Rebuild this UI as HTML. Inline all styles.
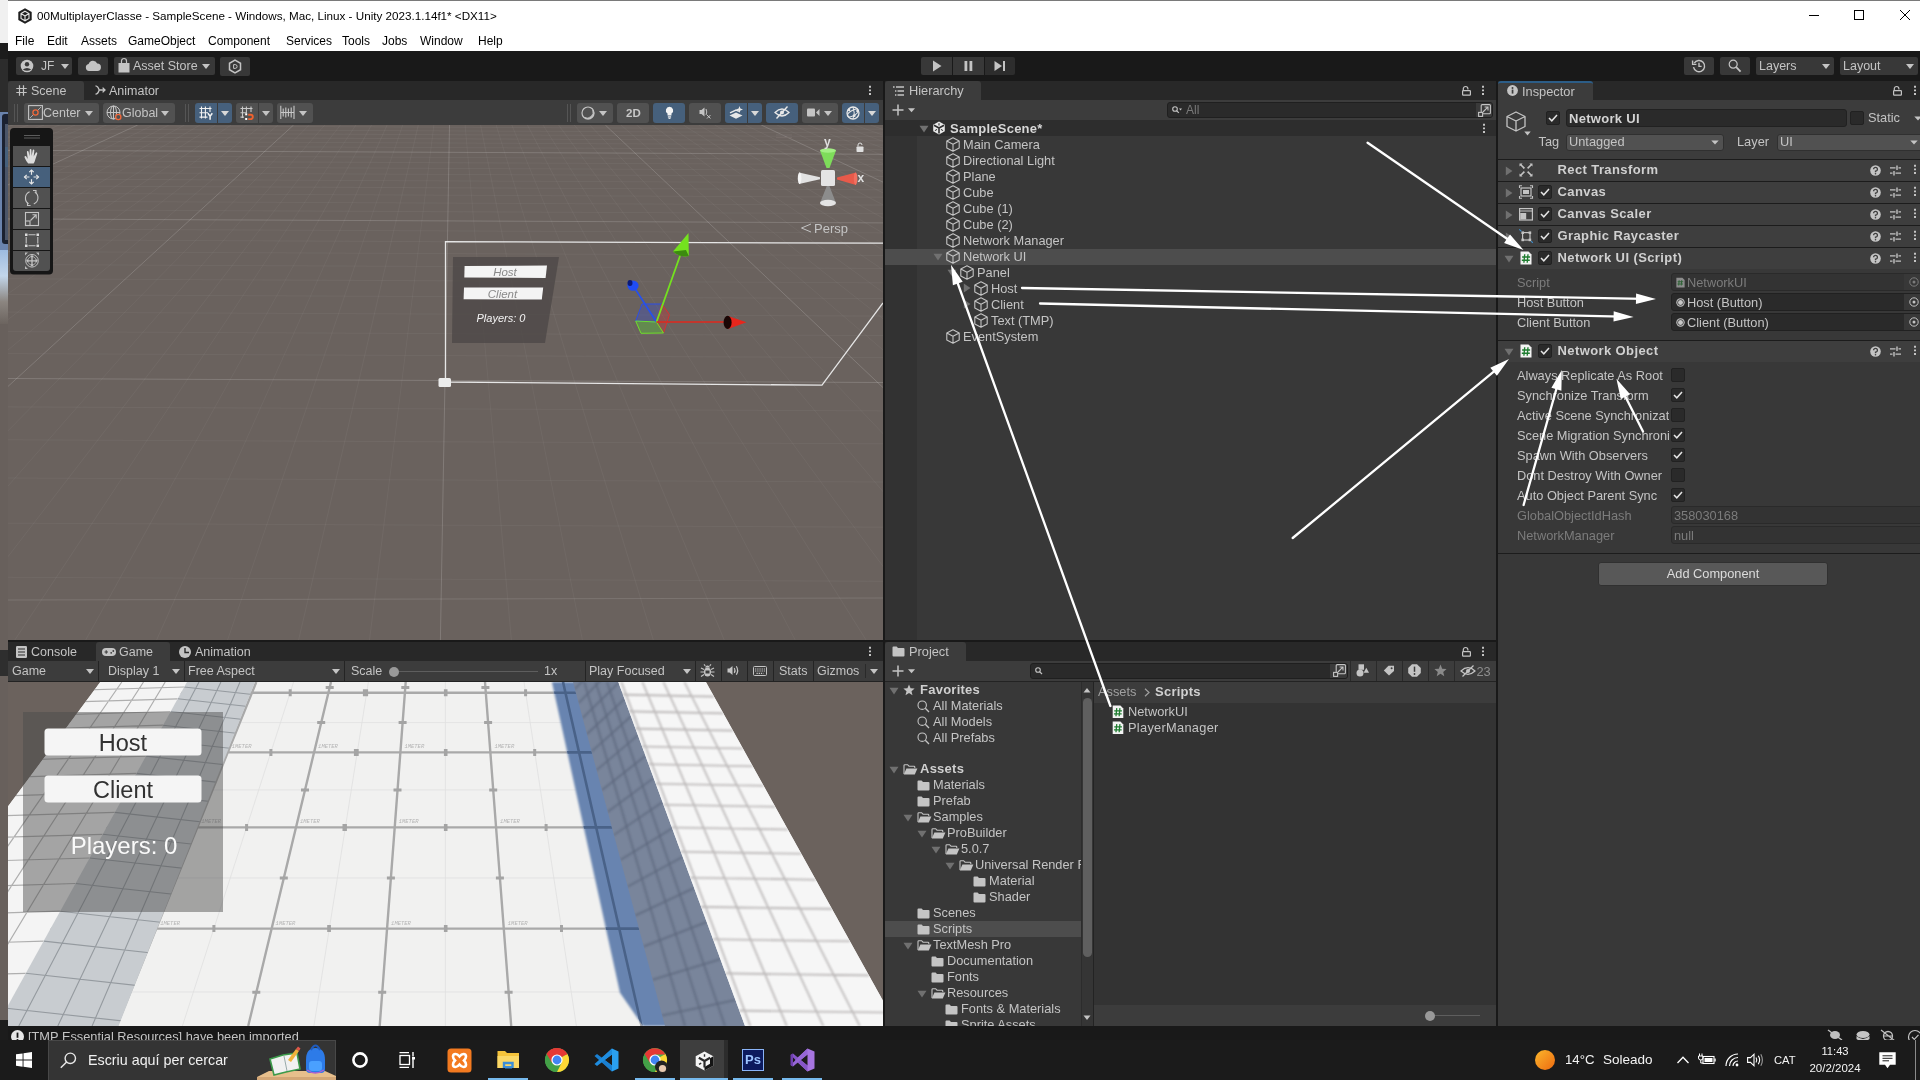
<!DOCTYPE html>
<html><head><meta charset="utf-8"><title>Unity</title>
<style>
*{box-sizing:border-box;margin:0;padding:0}
html,body{width:1920px;height:1080px;overflow:hidden;background:#191919;font-family:"Liberation Sans",sans-serif;font-size:12px;color:#c4c4c4}
.a{position:absolute}
.t{position:absolute;white-space:nowrap;line-height:16px;height:16px}
.b{font-weight:bold}
#win{position:absolute;left:8px;top:0;width:1912px;height:1040px;background:transparent;overflow:hidden;will-change:transform}
#title{position:absolute;left:0;top:0;width:1912px;height:51px;background:#fff;border-top:1px solid #7a7a7a;color:#000}
.menu{position:absolute;top:32px;font-size:12px;color:#000;line-height:16px}
.tb{position:absolute;background:#383838;border-radius:2px}
.tabbar{position:absolute;background:#282828}
.tab{position:absolute;background:#3c3c3c;border-radius:3px 3px 0 0}
.ptool{position:absolute;background:#3c3c3c}
.sb{position:absolute;background:#515151;border-radius:3px}
.sb.on{background:#46607c}
.panel{position:absolute;background:#383838}
.inp{position:absolute;background:#2a2a2a;border:1px solid #212121;border-radius:3px}
.tri-d{position:absolute;width:0;height:0;border-left:4px solid transparent;border-right:4px solid transparent;border-top:5px solid #c4c4c4}
.tri-r{position:absolute;width:0;height:0;border-top:4px solid transparent;border-bottom:4px solid transparent;border-left:6px solid #6e6e6e}
.fold-d{position:absolute;width:0;height:0;border-left:5px solid transparent;border-right:5px solid transparent;border-top:7px solid #6e6e6e}
svg{position:absolute;overflow:visible}
</style></head><body>

<!-- left strip of window behind -->
<div class="a" id="strip" style="left:0;top:0;width:8px;height:1040px;background:#2b2b2b">
  <div class="a" style="left:0;top:0;width:8px;height:43px;background:#f0f0f0"></div>
  <div class="a" style="left:0;top:43px;width:8px;height:16px;background:#1c1c1c"></div>
  <div class="a" style="left:0;top:59px;width:8px;height:53px;background:#2c2c2c"></div>
  <div class="a" style="left:0;top:112px;width:8px;height:138px;background:#6a83ad"></div>
  <div class="a" style="left:2px;top:114px;width:6px;height:130px;background:#1b2130;border-radius:3px 0 0 3px"></div>
  <div class="a" style="left:5px;top:124px;width:3px;height:116px;background:#4b5568"></div>
  <div class="a" style="left:5px;top:147px;width:3px;height:20px;background:#46607c"></div>
  <div class="a" style="left:0;top:250px;width:8px;height:74px;background:linear-gradient(#9dbbe0,#c3d6ea 35%,#8b8580 70%,#6c645f)"></div>
  <div class="a" style="left:0;top:324px;width:8px;height:326px;background:#68605c"></div>
  <div class="a" style="left:0;top:650px;width:8px;height:26px;background:#2e2e2e"></div>
  <div class="a" style="left:0;top:676px;width:8px;height:344px;background:#68605c"></div>
  <div class="a" style="left:0;top:1020px;width:8px;height:20px;background:#1c1c1c"></div>
</div>

<div id="win">
  <!-- TITLE BAR -->
  <div id="title">
    <div class="t" style="left:29px;top:7px;font-size:11.66px;color:#000">00MultiplayerClasse - SampleScene - Windows, Mac, Linux - Unity 2023.1.14f1* &lt;DX11&gt;</div>
    <div class="menu" style="left:7px">File</div>
    <div class="menu" style="left:39px">Edit</div>
    <div class="menu" style="left:73px">Assets</div>
    <div class="menu" style="left:120px">GameObject</div>
    <div class="menu" style="left:200px">Component</div>
    <div class="menu" style="left:278px">Services</div>
    <div class="menu" style="left:334px">Tools</div>
    <div class="menu" style="left:374px">Jobs</div>
    <div class="menu" style="left:412px">Window</div>
    <div class="menu" style="left:470px">Help</div>
  </div>
  
  <!-- MAIN TOOLBAR (y 51-81), coordinates relative to #win (x-8) -->
  <div class="tb" style="left:8px;top:57px;width:56px;height:18px"></div>
  <svg style="left:12px;top:59px" width="14" height="14" viewBox="0 0 14 14"><circle cx="7" cy="7" r="6.3" fill="#c4c4c4"/><circle cx="7" cy="5.2" r="2.2" fill="#383838"/><path d="M2.8 10.6 Q7 7.2 11.2 10.6 Q7 13 2.8 10.6Z" fill="#383838"/></svg>
  <div class="t" style="left:33px;top:58px">JF</div>
  <div class="tri-d" style="left:53px;top:64px"></div>
  <div class="tb" style="left:70px;top:57px;width:30px;height:18px"></div>
  <svg style="left:77px;top:60px" width="16" height="11" viewBox="0 0 16 11"><path d="M4 11 A3.5 3.5 0 0 1 3.6 4.1 A4.6 4.6 0 0 1 12.2 3.6 A3.7 3.7 0 0 1 12.3 11Z" fill="#c4c4c4"/></svg>
  <div class="tb" style="left:106px;top:57px;width:101px;height:18px"></div>
  <svg style="left:110px;top:58px" width="12" height="15" viewBox="0 0 12 15"><path d="M0.5 5 H11.5 V14.5 H0.5Z" fill="#c4c4c4"/><path d="M3.5 5 V3 A2.5 2.5 0 0 1 8.5 3 V5" fill="none" stroke="#c4c4c4" stroke-width="1.2"/></svg>
  <div class="t" style="left:125px;top:58px;font-size:12.5px">Asset Store</div>
  <div class="tri-d" style="left:194px;top:64px"></div>
  <div class="tb" style="left:212px;top:57px;width:30px;height:19px"></div>
  <svg style="left:220px;top:59px" width="14" height="15" viewBox="0 0 14 15"><path d="M7 1.2 L12.5 4.3 V10.7 L7 13.8 L1.5 10.7 V4.3Z" fill="none" stroke="#c4c4c4" stroke-width="1.5"/><path d="M5.6 5.6 H7.2 A1.9 1.9 0 0 1 7.2 9.4 H5.6Z" fill="none" stroke="#c4c4c4" stroke-width="1"/></svg>

  <!-- play controls -->
  <div class="tb" style="left:913px;top:57px;width:31px;height:18px;border-radius:2px 0 0 2px"></div>
  <div class="tb" style="left:945px;top:57px;width:31px;height:18px;border-radius:0"></div>
  <div class="tb" style="left:977px;top:57px;width:30px;height:18px;border-radius:0 2px 2px 0;background:#2d2d2d"></div>
  <svg style="left:924px;top:60px" width="10" height="12" viewBox="0 0 10 12"><path d="M1 0.5 L9.5 6 L1 11.5Z" fill="#c4c4c4"/></svg>
  <svg style="left:956px;top:61px" width="9" height="10" viewBox="0 0 9 10"><rect x="0.5" y="0" width="2.8" height="10" fill="#c4c4c4"/><rect x="5.5" y="0" width="2.8" height="10" fill="#c4c4c4"/></svg>
  <svg style="left:986px;top:61px" width="12" height="10" viewBox="0 0 12 10"><path d="M0.5 0 L8 5 L0.5 10Z" fill="#c4c4c4"/><rect x="9" y="0" width="2" height="10" fill="#c4c4c4"/></svg>

  <!-- right controls -->
  <div class="tb" style="left:1676px;top:57px;width:30px;height:18px"></div>
  <svg style="left:1684px;top:59px" width="14" height="14" viewBox="0 0 14 14"><path d="M2.2 4.2 A5.6 5.6 0 1 1 1.5 8.2" fill="none" stroke="#c4c4c4" stroke-width="1.4"/><path d="M0.6 1.6 V5.4 H4.4" fill="none" stroke="#c4c4c4" stroke-width="1.4"/><path d="M7 3.8 V7.4 H9.6" fill="none" stroke="#c4c4c4" stroke-width="1.4"/></svg>
  <div class="tb" style="left:1712px;top:57px;width:30px;height:18px"></div>
  <svg style="left:1720px;top:59px" width="14" height="14" viewBox="0 0 14 14"><circle cx="5.2" cy="5.2" r="4" fill="none" stroke="#c4c4c4" stroke-width="1.2"/><path d="M8.2 8.2 L12.6 12.6" stroke="#c4c4c4" stroke-width="1.8"/></svg>
  <div class="tb" style="left:1748px;top:57px;width:78px;height:18px"></div>
  <div class="t" style="left:1751px;top:58px;font-size:12.5px">Layers</div>
  <div class="tri-d" style="left:1814px;top:64px"></div>
  <div class="tb" style="left:1832px;top:57px;width:78px;height:18px"></div>
  <div class="t" style="left:1835px;top:58px;font-size:12.5px">Layout</div>
  <div class="tri-d" style="left:1898px;top:64px"></div>

  <!-- window controls -->
  <div class="a" style="left:1801px;top:15px;width:10px;height:1px;background:#000"></div>
  <div class="a" style="left:1846px;top:10px;width:10px;height:10px;border:1px solid #000"></div>
  <svg style="left:1892px;top:10px" width="10" height="10" viewBox="0 0 10 10"><path d="M0 0 L10 10 M10 0 L0 10" stroke="#000" stroke-width="1"/></svg>
  <!-- unity logo in title -->
  <svg style="left:10px;top:8px" width="14" height="16" viewBox="0 0 14 16"><path d="M7 0.3 L13.7 4.1 V11.900 L7 15.700 L0.3 11.900 V4.100Z" fill="#1e1e1e"/><path d="M7 3.200 L11 5.500 V10.400 L7 12.800 L3 10.400 V5.500Z M7 8 V12.800 M7 8 L3 5.500 M7 8 L11 5.500" fill="none" stroke="#e4e4e4" stroke-width="1.100"/></svg>
  <!--TOOLBAR-->
  
  <!-- SCENE PANEL: window coords (x-8). panel x 0..875 -->
  <div class="tabbar" style="left:0;top:81px;width:875px;height:19px"></div>
  <div class="tab" style="left:0;top:81px;width:76px;height:19px"></div>
  <svg style="left:7.500px;top:85px" width="11" height="11" viewBox="0 0 11 11"><path d="M3.500 0.300 V10.700 M7.500 0.300 V10.700 M0.300 3.500 H10.700 M0.300 7.500 H10.700" stroke="#c4c4c4" stroke-width="1.200" fill="none"/></svg>
  <div class="t" style="left:23px;top:83px;font-size:12.5px">Scene</div>
  <svg style="left:87px;top:85px" width="11" height="10" viewBox="0 0 11 10"><path d="M0.500 0.800 Q3 1 4.200 5 Q3 9 0.500 9.200 M4.200 5 H10 M7.600 2.600 L10 5 L7.600 7.400" stroke="#c4c4c4" stroke-width="1.300" fill="none"/></svg>
  <div class="t" style="left:101px;top:83px;font-size:12.5px">Animator</div>
  <svg style="left:860px;top:85px" width="4" height="12" viewBox="0 0 4 12"><path d="M1 0.800 H3 V2.700 H1Z M1 4.400 H3 V6.300 H1Z M1 8 H3 V9.900 H1Z" fill="#c4c4c4"/></svg>
  <div class="ptool" style="left:0;top:100px;width:875px;height:25px"></div>
  <div class="a" style="left:6px;top:104px;width:1px;height:18px;background:#555"></div>
  <div class="a" style="left:9px;top:104px;width:1px;height:18px;background:#555"></div>
  <div class="sb" style="left:16px;top:103px;width:75px;height:20px"></div>
  <svg style="left:20px;top:105px" width="15" height="15" viewBox="0 0 15 15"><rect x="0.6" y="0.6" width="13.8" height="13.8" fill="none" stroke="#c4c4c4" stroke-width="1.1"/><path d="M2 13 L13 2" stroke="#c4c4c4" stroke-width="0.8"/><circle cx="7.5" cy="7.5" r="2.6" fill="#515151" stroke="#f0683a" stroke-width="1.3"/></svg>
  <div class="t" style="left:35px;top:105px;font-size:12.5px">Center</div>
  <div class="tri-d" style="left:77px;top:111px"></div>
  <div class="sb" style="left:95px;top:103px;width:72px;height:20px"></div>
  <svg style="left:98px;top:105px" width="17" height="16" viewBox="0 0 17 16"><circle cx="7.5" cy="7.5" r="6.5" fill="none" stroke="#c4c4c4" stroke-width="1"/><ellipse cx="7.5" cy="7.5" rx="3" ry="6.5" fill="none" stroke="#c4c4c4" stroke-width="1"/><path d="M1 7.5 H14 M7.5 1 V14" stroke="#c4c4c4" stroke-width="1"/><circle cx="12.3" cy="12" r="2.6" fill="#515151" stroke="#f0683a" stroke-width="1.3"/></svg>
  <div class="t" style="left:114px;top:105px;font-size:12.5px">Global</div>
  <div class="tri-d" style="left:153px;top:111px"></div>
  <div class="a" style="left:177px;top:104px;width:1px;height:18px;background:#555"></div>
  <div class="a" style="left:180px;top:104px;width:1px;height:18px;background:#555"></div>
  <div class="sb on" style="left:187px;top:103px;width:22px;height:20px;border-radius:3px 0 0 3px"></div>
  <div class="sb on" style="left:210px;top:103px;width:14px;height:20px;border-radius:0 3px 3px 0"></div>
  <svg style="left:190px;top:105px" width="16" height="16" viewBox="0 0 16 16"><path d="M3.500 1.500 V13.500 M7.400 1.500 V13.500 M12 1.500 V7 M1.500 3.500 H13.500 M1.500 7.800 H10 M1.500 12.100 H9.500" stroke="#f0f0f0" stroke-width="1.100" fill="none"/><path d="M9.900 8.200 L12.100 11.300 L14.300 8.200 M12.100 11.300 V14.700" stroke="#f4f4f4" stroke-width="1.500" fill="none"/></svg>
  <div class="tri-d" style="left:213px;top:111px;border-top-color:#d8d8d8"></div>
  <div class="sb" style="left:228px;top:103px;width:22px;height:20px;border-radius:3px 0 0 3px"></div>
  <div class="sb" style="left:251px;top:103px;width:14px;height:20px;border-radius:0 3px 3px 0"></div>
  <svg style="left:231px;top:105px" width="16" height="16" viewBox="0 0 16 16"><path d="M3.500 1.500 V13 M7.400 1.500 V7.800 M12 1.500 V7 M1.500 3.500 H13.500 M1.500 7.800 H8 M1.500 12.100 H5" stroke="#c8c8c8" stroke-width="1.100" fill="none"/><path d="M9.200 9.700 H11.600 A2.200 2.200 0 0 1 11.600 14.100 H9.200" stroke="#f0622e" stroke-width="1.900" fill="none"/><rect x="6.200" y="8.300" width="2" height="2" fill="#fff"/><rect x="6.200" y="13" width="2" height="2" fill="#fff"/></svg>
  <div class="tri-d" style="left:254px;top:111px"></div>
  <div class="sb" style="left:269px;top:103px;width:36px;height:20px"></div>
  <svg style="left:272px;top:105px" width="15" height="15" viewBox="0 0 15 15"><path d="M0.800 0.800 V14.100 M14 0.800 V14.100 M3.200 3.500 V11.500 M5.800 2.500 V12.500 M8.400 3.500 V11.500 M11.200 2.500 V12.500 M0.800 7.500 H14" stroke="#c8c8c8" stroke-width="1.100" fill="none"/></svg>
  <div class="tri-d" style="left:291px;top:111px"></div>

  <!-- right scene toolbar -->
  <div class="a" style="left:559px;top:104px;width:1px;height:18px;background:#555"></div>
  <div class="a" style="left:562px;top:104px;width:1px;height:18px;background:#555"></div>
  <div class="sb" style="left:569px;top:103px;width:36px;height:20px"></div>
  <svg style="left:573px;top:106px" width="14" height="14" viewBox="0 0 14 14"><circle cx="7" cy="7" r="6" fill="none" stroke="#c4c4c4" stroke-width="1.200"/><path d="M11.800 4.200 A5.600 5.600 0 0 1 3.400 11.400 A6 6 0 0 0 11.800 4.200Z" fill="#c4c4c4" stroke="#c4c4c4" stroke-width="0.800"/></svg>
  <div class="tri-d" style="left:591px;top:111px"></div>
  <div class="sb" style="left:609px;top:103px;width:32px;height:20px"></div>
  <div class="t b" style="left:618px;top:105px;font-size:11.500px;color:#c8c8c8">2D</div>
  <div class="sb on" style="left:645px;top:103px;width:32px;height:20px"></div>
  <svg style="left:657px;top:106px" width="9" height="14" viewBox="0 0 9 14"><path d="M4.500 0.800 A3.700 3.700 0 0 1 6.500 7.600 V9.400 H2.500 V7.600 A3.700 3.700 0 0 1 4.500 0.800Z" fill="#f4f4f4"/><rect x="2.900" y="10.300" width="3.200" height="1.300" fill="#f4f4f4"/><rect x="3.500" y="12.100" width="2" height="0.900" fill="#f4f4f4"/></svg>
  <div class="sb" style="left:681px;top:103px;width:32px;height:20px"></div>
  <svg style="left:691px;top:107px" width="13" height="12" viewBox="0 0 13 12"><path d="M0.5 3 H2.5 L5.5 0.5 V9.5 L2.5 7 H0.5Z" fill="#c4c4c4"/><path d="M7 2 Q8.5 5 7 8" stroke="#c4c4c4" fill="none"/><path d="M8 8 L11.5 11.5 M11.5 8 L8 11.5" stroke="#c4c4c4" stroke-width="1"/></svg>
  <div class="sb on" style="left:717px;top:103px;width:22px;height:20px;border-radius:3px 0 0 3px"></div>
  <div class="sb on" style="left:740px;top:103px;width:14px;height:20px;border-radius:0 3px 3px 0"></div>
  <svg style="left:721px;top:106px" width="15" height="14" viewBox="0 0 15 14"><path d="M0.5 9.5 L7 6.5 L13.5 9.5 L7 12.8Z" fill="#e8e8e8"/><path d="M1 6.8 L7 4 L10 5.3" stroke="#e8e8e8" stroke-width="1.4" fill="none"/><path d="M10.5 0 L11.4 2.6 L14 3.5 L11.4 4.4 L10.5 7 L9.6 4.4 L7 3.5 L9.6 2.6Z" fill="#e8e8e8"/></svg>
  <div class="tri-d" style="left:743px;top:111px;border-top-color:#d8d8d8"></div>
  <div class="sb on" style="left:758px;top:103px;width:32px;height:20px"></div>
  <svg style="left:766px;top:106px" width="16" height="13" viewBox="0 0 16 13"><path d="M1 6.5 Q8 -0.5 15 6.5 Q8 13.5 1 6.5Z" fill="none" stroke="#e8e8e8" stroke-width="1.3"/><circle cx="8" cy="6.5" r="2" fill="#e8e8e8"/><path d="M2.5 12.5 L13.5 0.5" stroke="#e8e8e8" stroke-width="1.4"/></svg>
  <div class="sb" style="left:794px;top:103px;width:36px;height:20px"></div>
  <svg style="left:799px;top:108px" width="13" height="9" viewBox="0 0 13 9"><rect x="0" y="0.5" width="8" height="8" rx="1" fill="#c4c4c4"/><path d="M9 4.5 L12.5 1 V8Z" fill="#c4c4c4"/></svg>
  <div class="tri-d" style="left:816px;top:111px"></div>
  <div class="sb on" style="left:834px;top:103px;width:22px;height:20px;border-radius:3px 0 0 3px"></div>
  <div class="sb on" style="left:857px;top:103px;width:14px;height:20px;border-radius:0 3px 3px 0"></div>
  <svg style="left:838px;top:106px" width="14" height="14" viewBox="0 0 14 14"><circle cx="7" cy="7" r="6" fill="none" stroke="#e8e8e8" stroke-width="1.3"/><ellipse cx="7" cy="7" rx="6" ry="2.6" fill="none" stroke="#e8e8e8" stroke-width="1" transform="rotate(-30 7 7)"/><path d="M7 1 Q9.5 7 7 13" fill="none" stroke="#e8e8e8" stroke-width="1"/><circle cx="3" cy="4" r="1.3" fill="#e8e8e8"/><circle cx="11.5" cy="5" r="1.3" fill="#e8e8e8"/><circle cx="8.3" cy="9.8" r="1.3" fill="#e8e8e8"/></svg>
  <div class="tri-d" style="left:860px;top:111px;border-top-color:#d8d8d8"></div>

  <!-- scene view -->
  <div class="a" id="sceneview" style="left:0;top:125px;width:875px;height:515px;background:#6a625e;overflow:hidden">
    <svg style="left:0;top:0" width="875" height="515" viewBox="8 125 875 515">
      <!-- grid lines -->
      <path d="M-158.5 125 L-2326.6 640 M-142.9 125 L-2255.7 640 M-127.3 125 L-2184.7 640 M-111.7 125 L-2113.8 640 M-96.1 125 L-2042.8 640 M-80.5 125 L-1971.8 640 M-64.9 125 L-1900.9 640 M-49.3 125 L-1829.9 640 M-33.8 125 L-1759.0 640 M-2.6 125 L-1617.1 640 M13.0 125 L-1546.2 640 M28.6 125 L-1475.2 640 M44.2 125 L-1404.2 640 M59.8 125 L-1333.3 640 M75.4 125 L-1262.3 640 M90.9 125 L-1191.4 640 M106.5 125 L-1120.5 640 M122.1 125 L-1049.5 640 M153.3 125 L-907.6 640 M168.9 125 L-836.7 640 M184.5 125 L-765.7 640 M200.1 125 L-694.8 640 M215.7 125 L-623.8 640 M231.2 125 L-552.9 640 M246.8 125 L-481.9 640 M262.4 125 L-411.0 640 M278.0 125 L-340.0 640 M309.2 125 L-198.1 640 M324.8 125 L-127.1 640 M340.4 125 L-56.2 640 M355.9 125 L14.8 640 M371.5 125 L85.7 640 M387.1 125 L156.6 640 M402.7 125 L227.6 640 M418.3 125 L298.6 640 M433.9 125 L369.5 640 M465.1 125 L511.4 640 M480.6 125 L582.4 640 M496.2 125 L653.3 640 M511.8 125 L724.2 640 M527.4 125 L795.2 640 M543.0 125 L866.1 640 M558.6 125 L937.1 640 M574.2 125 L1008.0 640 M589.8 125 L1079.0 640 M620.9 125 L1220.9 640 M636.5 125 L1291.8 640 M652.1 125 L1362.8 640 M667.7 125 L1433.8 640 M683.3 125 L1504.7 640 M698.9 125 L1575.7 640 M714.5 125 L1646.6 640 M730.0 125 L1717.5 640 M745.6 125 L1788.5 640 M776.8 125 L1930.4 640 M792.4 125 L2001.3 640 M808.0 125 L2072.3 640 M823.6 125 L2143.2 640 M839.1 125 L2214.2 640 M854.7 125 L2285.2 640 M870.3 125 L2356.1 640 M885.9 125 L2427.1 640 M901.5 125 L2498.0 640 M8 577.3 L883 581.3 M8 523.2 L883 527.2 M8 478.0 L883 482.0 M8 439.8 L883 443.8 M8 406.9 L883 410.9 M8 353.6 L883 357.6 M8 331.6 L883 335.6 M8 312.1 L883 316.1 M8 294.6 L883 298.6 M8 278.8 L883 282.8 M8 264.5 L883 268.5 M8 251.6 L883 255.6 M8 239.7 L883 243.7 M8 228.9 L883 232.9 M8 209.7 L883 213.7 M8 201.1 L883 205.1 M8 193.2 L883 197.2 M8 185.8 L883 189.8 M8 178.9 L883 182.9 M8 172.4 L883 176.4 M8 166.4 L883 170.4 M8 160.7 L883 164.7 M8 155.4 L883 159.4 M8 145.6 L883 149.6 M8 141.0 L883 145.0 M8 136.8 L883 140.8 M8 132.7 L883 136.7 M8 128.9 L883 132.9 M8 125.2 L883 129.2" stroke="#fff" stroke-opacity="0.045" stroke-width="1" fill="none"/>
      <path d="M-174.0 125 L-2397.6 640 M-18.2 125 L-1688.1 640 M137.7 125 L-978.5 640 M293.6 125 L-269.0 640 M449.5 125 L440.4 640 M605.3 125 L1150.0 640 M761.2 125 L1859.5 640 M8 378.5 L883 382.5 M8 218.9 L883 222.9 M8 150.3 L883 154.3" stroke="#fff" stroke-opacity="0.16" stroke-width="1" fill="none"/>
      <path d="M8 600 L883 598" stroke="#fff" stroke-opacity="0.12" stroke-width="1" fill="none"/>
      <!-- canvas rect -->
      <path d="M445.5 382 V241.7 L883 243.2 M445.5 382 L822 385.2 L883 303" stroke="#e6e6e6" stroke-width="1.3" fill="none"/>
      <rect x="438.5" y="378" width="12.5" height="9" rx="1.5" fill="#ececec"/>
      <!-- UI panel -->
      <path d="M453 257 H559 L545 343 H452Z" fill="#4d4947" fill-opacity="0.8"/>
      <path d="M464.6 266 L547 265.5 L545.6 278 L464.3 277.6Z" fill="#f4f4f4"/>
      <path d="M464 287.6 L543.2 287.4 L541.8 299.6 L463.6 299.3Z" fill="#f4f4f4"/>
      <text x="505" y="276" font-size="11.5" font-style="italic" fill="#8a8a8a" text-anchor="middle" font-family="Liberation Sans, sans-serif">Host</text>
      <text x="502.5" y="297.5" font-size="11.5" font-style="italic" fill="#8a8a8a" text-anchor="middle" font-family="Liberation Sans, sans-serif">Client</text>
      <text x="501" y="321.5" font-size="11" font-style="italic" fill="#f4f4f4" text-anchor="middle" font-family="Liberation Sans, sans-serif">Players: 0</text>
      <!-- transform gizmo -->
      <path d="M635.7 321 L642 304 H661.7 L656.5 322Z" fill="#3a50c8" fill-opacity="0.35" stroke="#2c4ee6" stroke-width="1"/>
      <path d="M661.7 304 L669.5 314.6 L663.5 333 L656.5 322Z" fill="#c83a3a" fill-opacity="0.35" stroke="#d93030" stroke-width="1"/>
      <path d="M635.7 321 L656.5 322 L663.5 333 L641 333.3Z" fill="#5ac83a" fill-opacity="0.4" stroke="#6fe02a" stroke-width="1"/>
      <path d="M656.5 322 L634 287" stroke="#2450f0" stroke-width="1.6"/>
      <ellipse cx="633" cy="285.6" rx="5.6" ry="5.2" fill="#1f4cf5"/><ellipse cx="630" cy="283" rx="2.5" ry="3" fill="#0a1a7a"/>
      <path d="M656.5 322 L680 256" stroke="#74e21f" stroke-width="1.8"/>
      <path d="M688.5 233 L673 251.5 Q680 258 688.8 256Z" fill="#74e21f"/><path d="M673 251.5 Q680 258 688.8 256 L686 250Z" fill="#3c8a10"/>
      <path d="M656.5 322 H726" stroke="#e0281e" stroke-width="1.6"/>
      <path d="M728 316 L746.5 322.3 L728 329Z" fill="#e8261c"/>
      <ellipse cx="727.6" cy="322.4" rx="4" ry="6.6" fill="#1a0605"/>
      <!-- orientation gizmo -->
      <path d="M820 150.5 H836 L829.5 168 H826.5Z" fill="#7edc5a"/><ellipse cx="828" cy="150.5" rx="8" ry="2.2" fill="#a2ee84"/>
      <path d="M799 172.5 V184 L820 179.2 V177.2Z" fill="#e2e2e2"/><ellipse cx="799.6" cy="178.2" rx="1.8" ry="5.8" fill="#f4f4f4"/>
      <path d="M856 172.5 V185 L837 179.6 V177.6Z" fill="#e85a4a"/><ellipse cx="855.6" cy="178.7" rx="1.8" ry="6.2" fill="#f07060"/>
      <path d="M826.8 186 H829.4 L836 203 H820Z" fill="#8c8c8c"/><ellipse cx="828" cy="203" rx="8" ry="3.2" fill="#e4e4e4"/>
      <rect x="821" y="170" width="14" height="16" rx="1.5" fill="#e4e4e4"/>
      <text x="824" y="146" font-size="12" font-weight="bold" fill="#e0e0e0" font-family="Liberation Sans, sans-serif">y</text>
      <text x="857.5" y="182" font-size="12" font-weight="bold" fill="#e0e0e0" font-family="Liberation Sans, sans-serif">x</text>
      <rect x="856.5" y="146.5" width="7" height="5.5" rx="0.8" fill="#e0e0e0"/><path d="M858 146.5 V145 A2 2 0 0 1 862 145" stroke="#e0e0e0" fill="none" stroke-width="1"/>
      <path d="M776 135 H792 M776 137.6 H792" stroke="#77706c" stroke-width="0.8"/>
      <path d="M811 224 L801.5 228 L811 232" stroke="#c4c4c4" stroke-width="1" fill="none"/>
      <text x="814" y="232.5" font-size="13" fill="#c4c4c4" font-family="Liberation Sans, sans-serif">Persp</text>
      <!-- tools overlay -->
      <rect x="10" y="128" width="43" height="146.500" rx="4" fill="#161616"/>
      <path d="M24 135.5 H40 M24 138 H40" stroke="#6e6e6e" stroke-width="0.8"/>
      <rect x="13" y="146" width="37" height="20" fill="#515151"/>
      <rect x="13" y="167" width="37" height="20" fill="#46607c"/>
      <rect x="13" y="188" width="37" height="20" fill="#515151"/>
      <rect x="13" y="209" width="37" height="20" fill="#515151"/>
      <rect x="13" y="230" width="37" height="20" fill="#515151"/>
      <path d="M13 251 H50 V268 Q50 271 47 271 H16 Q13 271 13 268Z" fill="#515151"/>
      <!-- hand -->
      <path d="M28.200 163.500 Q26 161.300 24.600 157.600 Q24.200 156.300 25.200 156.100 Q26.100 156 26.700 157.200 L27.700 159 L26.900 152 Q26.800 151 27.600 150.900 Q28.400 150.800 28.600 151.800 L29.500 156.200 L29.700 149.800 Q29.700 148.900 30.500 148.900 Q31.300 148.900 31.400 149.800 L31.600 156 L32.700 150.300 Q32.900 149.400 33.700 149.600 Q34.400 149.800 34.300 150.700 L33.700 156.600 L35.700 152.800 Q36.200 152 36.900 152.400 Q37.500 152.800 37.200 153.700 L35.300 159.600 Q34.800 162 33.600 163.500Z" fill="#dcdcdc"/>
      <!-- move -->
      <g stroke="#e6e6e6" stroke-width="1.2" fill="none"><path d="M31.5 170 V184 M24.5 177 H38.5"/><path d="M29.3 172.2 L31.5 170 L33.7 172.2 M29.3 181.8 L31.5 184 L33.7 181.8 M26.7 174.8 L24.5 177 L26.7 179.2 M36.3 174.8 L38.5 177 L36.3 179.2"/></g>
      <circle cx="31.5" cy="177" r="2.2" fill="#46607c"/>
      <!-- rotate -->
      <g stroke="#c4c4c4" stroke-width="1.100" fill="none"><path d="M28.600 203.800 A6.800 6.800 0 0 1 29.600 191.800"/><path d="M34.800 192 A6.800 6.800 0 0 1 33.800 204"/><path d="M33 190.500 H36 V193.600"/><path d="M30.600 205.500 H27.500 V202.300"/></g>
      <!-- scale -->
      <g stroke="#c4c4c4" stroke-width="1.100" fill="none"><rect x="25.500" y="212.500" width="13" height="13"/><rect x="25.500" y="221" width="4.500" height="4.500"/><path d="M30.500 220.500 L36 215 M32.500 214.800 H36.200 V218.500"/></g>
      <!-- rect -->
      <g stroke="#c4c4c4" stroke-width="1.100" fill="none"><path d="M28.500 234.800 H35.500 M28.500 245.800 H35.500 M26.200 237 V243.500 M37.800 237 V243.500"/></g>
      <g fill="#dcdcdc"><rect x="25" y="233.500" width="2.500" height="2.500"/><rect x="36.500" y="233.500" width="2.500" height="2.500"/><rect x="25" y="244.500" width="2.500" height="2.500"/><rect x="36.500" y="244.500" width="2.500" height="2.500"/></g>
      <!-- transform -->
      <g stroke="#c4c4c4" stroke-width="1" fill="none"><circle cx="32" cy="260.800" r="6.300"/><circle cx="32" cy="260.800" r="4.200" stroke-width="0.700"/><path d="M32 256 V265.600 M27.200 260.800 H36.800" stroke-width="1.300"/></g>
      <g fill="#c4c4c4"><path d="M32 254.800 L30.300 257 H33.700Z M32 266.800 L30.300 264.600 H33.700Z M26 260.800 L28.200 259.100 V262.500Z M38 260.800 L35.800 259.100 V262.500Z"/><path d="M25 252.500 H28 L25 255.500Z M39 252.500 H36 L39 255.500Z M25 269 H28 L25 266Z" opacity="0.900"/></g>
    </svg>
  </div>
  <!--SCENE-->
  
  <!-- GAME PANEL -->
  <div class="tabbar" style="left:0;top:642px;width:875px;height:19px"></div>
  <div class="tab" style="left:88px;top:642px;width:74px;height:19px"></div>
  <svg style="left:8px;top:646px" width="11" height="12" viewBox="0 0 11 12"><rect x="0" y="0" width="11" height="12" rx="1.2" fill="#c4c4c4"/><path d="M2 3 H9 M2 6 H9 M2 9 H9" stroke="#282828" stroke-width="1.2"/></svg>
  <div class="t" style="left:23px;top:644px;font-size:12.5px">Console</div>
  <svg style="left:94px;top:648px" width="14" height="8" viewBox="0 0 14 8"><rect x="0" y="0" width="14" height="8" rx="4" fill="#c4c4c4"/><path d="M2.5 4 H6 M4.2 2.3 V5.7" stroke="#3c3c3c" stroke-width="1.1"/><circle cx="9.2" cy="4.8" r="0.9" fill="#3c3c3c"/><circle cx="11.3" cy="3" r="0.9" fill="#3c3c3c"/></svg>
  <div class="t" style="left:111px;top:644px;font-size:12.5px">Game</div>
  <svg style="left:171px;top:646px" width="12" height="12" viewBox="0 0 12 12"><circle cx="6" cy="6" r="6" fill="#c4c4c4"/><path d="M6 2 V6.5 H10" stroke="#282828" stroke-width="1.4" fill="none"/></svg>
  <div class="t" style="left:187px;top:644px;font-size:12.5px">Animation</div>
  <svg style="left:860px;top:646px" width="4" height="12" viewBox="0 0 4 12"><path d="M1 0.800 H3 V2.700 H1Z M1 4.400 H3 V6.300 H1Z M1 8 H3 V9.900 H1Z" fill="#c4c4c4"/></svg>
  <div class="ptool" style="left:0;top:661px;width:875px;height:21px;border-bottom:1px solid #232323"></div>
  <div class="t" style="left:4px;top:663px;font-size:12.5px">Game</div><div class="tri-d" style="left:78px;top:669px"></div>
  <div class="a" style="left:90px;top:661px;width:1px;height:20px;background:#242424"></div>
  <div class="t" style="left:100px;top:663px;font-size:12.5px">Display 1</div><div class="tri-d" style="left:164px;top:669px"></div>
  <div class="a" style="left:176px;top:661px;width:1px;height:20px;background:#242424"></div>
  <div class="t" style="left:180px;top:663px;font-size:12.5px">Free Aspect</div><div class="tri-d" style="left:324px;top:669px"></div>
  <div class="a" style="left:336px;top:661px;width:1px;height:20px;background:#242424"></div>
  <div class="t" style="left:343px;top:663px;font-size:12.5px">Scale</div>
  <div class="a" style="left:386px;top:671px;width:144px;height:1px;background:#5e5e5e"></div>
  <div class="a" style="left:381px;top:667px;width:10px;height:10px;border-radius:5px;background:#999"></div>
  <div class="t" style="left:536px;top:663px;font-size:12.5px">1x</div>
  <div class="a" style="left:577px;top:661px;width:1px;height:20px;background:#242424"></div>
  <div class="t" style="left:581px;top:663px;font-size:12.5px">Play Focused</div><div class="tri-d" style="left:675px;top:669px"></div>
  <div class="a" style="left:687px;top:661px;width:1px;height:20px;background:#242424"></div>
  <svg style="left:692px;top:664px" width="15" height="14" viewBox="0 0 15 14"><ellipse cx="7.5" cy="8" rx="3.6" ry="4.6" fill="#c4c4c4"/><path d="M5 3.4 A2.6 2.6 0 0 1 10 3.4Z" fill="#c4c4c4"/><path d="M4 5.5 L1 4 M4 8 H0.5 M4 10.5 L1 12.5 M11 5.5 L14 4 M11 8 H14.5 M11 10.5 L14 12.5 M5.3 1.8 L4 0.3 M9.7 1.8 L11 0.3" stroke="#c4c4c4" stroke-width="1.1" fill="none"/><rect x="5.5" y="6.5" width="4" height="3" fill="#3c3c3c"/></svg>
  <div class="a" style="left:713px;top:661px;width:1px;height:20px;background:#242424"></div>
  <svg style="left:719px;top:665px" width="13" height="11" viewBox="0 0 13 11"><path d="M0.5 3.5 H2.5 L5.5 1 V10 L2.5 7.5 H0.5Z" fill="#c4c4c4"/><path d="M7.3 3 Q8.8 5.5 7.3 8 M9.3 1.3 Q12 5.5 9.3 9.7" stroke="#c4c4c4" stroke-width="1.2" fill="none"/></svg>
  <div class="a" style="left:739px;top:661px;width:1px;height:20px;background:#242424"></div>
  <svg style="left:745px;top:666px" width="14" height="10" viewBox="0 0 14 10"><rect x="0.5" y="0.5" width="13" height="9" rx="1" fill="none" stroke="#c4c4c4" stroke-width="1"/><path d="M2 3 H12 M2 5 H12 M3.5 7.3 H10.5" stroke="#c4c4c4" stroke-width="1.2" stroke-dasharray="1.3 0.9"/></svg>
  <div class="a" style="left:765px;top:661px;width:1px;height:20px;background:#242424"></div>
  <div class="t" style="left:771px;top:663px;font-size:12.5px">Stats</div>
  <div class="a" style="left:805px;top:661px;width:1px;height:20px;background:#242424"></div>
  <div class="t" style="left:809px;top:663px;font-size:12.5px">Gizmos</div>
  <div class="a" style="left:857px;top:664px;width:1px;height:14px;background:#2a2a2a"></div>
  <div class="tri-d" style="left:862px;top:669px"></div>
  <div class="a" id="gameview" style="left:0;top:682px;width:875px;height:344px;overflow:hidden">
<svg style="left:0;top:0" width="875" height="344" viewBox="8 682 875 344">
<defs><clipPath id="gv"><rect x="8" y="682" width="875" height="344"/></clipPath><filter id="bl" x="-5%" y="-5%" width="110%" height="110%"><feGaussianBlur stdDeviation="0.5"/></filter><filter id="bl3" x="-5%" y="-5%" width="110%" height="110%"><feGaussianBlur stdDeviation="0.8"/></filter><filter id="bl2" x="-5%" y="-5%" width="110%" height="110%"><feGaussianBlur stdDeviation="1.2"/></filter></defs>
<g clip-path="url(#gv)">
<rect x="8" y="682" width="875" height="344" fill="#6b625d"/>
<path d="M100 682 H706 L897 1026 H8 V806Z" fill="#f1f1f0"/>
<path d="M368.4 682 L313.9 1026 M445.4 682 L445.4 1026 M524.0 682 L576.4 1026 M293.6 682 L182.4 1026 M219.0 682 L50.9 1026 M8 722.6 H700 M8 789.9 H700 M8 878.0 H700 M8 992.0 H700" stroke="#e0e0e0" stroke-width="1" fill="none" opacity="0.8"/>
<path d="M331.0 682 L248.2 1026 M405.7 682 L379.7 1026 M485.0 682 L511.2 1026 M563.0 682 L641.5 1026 M256.3 682 L116.7 1026 M8 692.8 H700 M8 752.4 H700 M8 827.4 H700 M8 928.6 H700" stroke="#a9a9a9" stroke-width="2.4" fill="none" filter="url(#bl)"/>
<path d="M366.6 689.3 V696.3 M290.2 689.3 V696.3 M445.4 689.3 V696.3 M364.4 689.3 V696.3 M525.6 689.3 V696.3 M446.0 689.3 V696.3 M605.3 689.3 V696.3 M525.6 689.3 V696.3 M357.2 748.9 V755.9 M270.9 748.9 V755.9 M445.4 748.9 V755.9 M355.4 748.9 V755.9 M534.7 748.9 V755.9 M446.0 748.9 V755.9 M623.4 748.9 V755.9 M534.7 748.9 V755.9 M345.4 823.9 V830.9 M246.6 823.9 V830.9 M445.4 823.9 V830.9 M344.0 823.9 V830.9 M546.1 823.9 V830.9 M446.0 823.9 V830.9 M646.2 823.9 V830.9 M546.1 823.9 V830.9 M329.4 925.1 V932.1 M213.9 925.1 V932.1 M445.4 925.1 V932.1 M328.7 925.1 V932.1 M561.5 925.1 V932.1 M446.0 925.1 V932.1 M677.0 925.1 V932.1 M561.5 925.1 V932.1 M325.7 687.4 H333.7 M317.2 722.6 H325.2 M301.0 789.9 H309.0 M279.8 878.0 H287.8 M252.3 992.3 H260.3 M401.3 687.4 H409.3 M398.6 722.6 H406.6 M393.5 789.9 H401.5 M386.9 878.0 H394.9 M378.2 992.3 H386.2 M481.4 687.4 H489.4 M484.1 722.6 H492.1 M489.2 789.9 H497.2 M495.9 878.0 H503.9 M504.6 992.3 H512.6 M560.2 687.4 H568.2 M568.3 722.6 H576.3 M583.6 789.9 H591.6 M603.7 878.0 H611.7 M629.8 992.3 H637.8" stroke="#a4a4a4" stroke-width="3" fill="none" filter="url(#bl)"/>
<text x="318.1" y="748.4" font-size="5.5" fill="#b4b4b4" font-style="italic" font-family="Liberation Mono, monospace">1METER</text><text x="404.4" y="748.4" font-size="5.5" fill="#b4b4b4" font-style="italic" font-family="Liberation Mono, monospace">1METER</text><text x="494.4" y="748.4" font-size="5.5" fill="#b4b4b4" font-style="italic" font-family="Liberation Mono, monospace">1METER</text><text x="583.1" y="748.4" font-size="5.5" fill="#b4b4b4" font-style="italic" font-family="Liberation Mono, monospace">1METER</text><text x="231.7" y="748.4" font-size="5.5" fill="#b4b4b4" font-style="italic" font-family="Liberation Mono, monospace">1METER</text><text x="300.0" y="823.4" font-size="5.5" fill="#b4b4b4" font-style="italic" font-family="Liberation Mono, monospace">1METER</text><text x="398.7" y="823.4" font-size="5.5" fill="#b4b4b4" font-style="italic" font-family="Liberation Mono, monospace">1METER</text><text x="500.1" y="823.4" font-size="5.5" fill="#b4b4b4" font-style="italic" font-family="Liberation Mono, monospace">1METER</text><text x="600.2" y="823.4" font-size="5.5" fill="#b4b4b4" font-style="italic" font-family="Liberation Mono, monospace">1METER</text><text x="201.3" y="823.4" font-size="5.5" fill="#b4b4b4" font-style="italic" font-family="Liberation Mono, monospace">1METER</text><text x="275.6" y="924.6" font-size="5.5" fill="#b4b4b4" font-style="italic" font-family="Liberation Mono, monospace">1METER</text><text x="391.1" y="924.6" font-size="5.5" fill="#b4b4b4" font-style="italic" font-family="Liberation Mono, monospace">1METER</text><text x="507.8" y="924.6" font-size="5.5" fill="#b4b4b4" font-style="italic" font-family="Liberation Mono, monospace">1METER</text><text x="623.3" y="924.6" font-size="5.5" fill="#b4b4b4" font-style="italic" font-family="Liberation Mono, monospace">1METER</text><text x="160.2" y="924.6" font-size="5.5" fill="#b4b4b4" font-style="italic" font-family="Liberation Mono, monospace">1METER</text>
<path d="M551.9 682 L585 682 L677 1026 L643 1026 L620 992.8Z" fill="#6884b0" filter="url(#bl2)"/>
<clipPath id="sh"><path d="M551.9 682 L573 682 L665 1026 L643 1026 L620 992.8Z"/></clipPath>
<path d="M563.0 682 L641.5 1026 M500 692.8 H700 M500 752.4 H700 M500 827.4 H700 M500 928.6 H700" stroke="#4a6288" stroke-width="2.6" fill="none" clip-path="url(#sh)" filter="url(#bl)"/>
<path d="M573 682 H618.3 L745 1026 H665Z" fill="#79859b"/>
<clipPath id="sf"><path d="M573 682 H618.3 L745 1026 H665Z"/></clipPath>
<path d="M584.3 682 L685.0 1026 M595.6 682 L705.0 1026 M607.0 682 L725.0 1026 M571.4 676.0 L603.2 641.5 M574.9 689.0 L607.9 654.2 M578.6 703.0 L613.0 668.0 M582.6 718.0 L618.5 682.9 M586.9 734.1 L624.5 699.0 M591.6 751.5 L630.9 716.4 M596.5 770.2 L637.9 735.3 M601.9 790.2 L645.4 755.8 M607.7 811.8 L653.6 778.0 M613.8 835.0 L662.5 802.1 M620.5 859.9 L672.1 828.3 M627.6 886.7 L682.6 856.9 M635.3 915.5 L694.1 888.0 M643.6 946.5 L706.6 922.0 M652.5 979.8 L720.3 959.3 M662.0 1015.5 L735.4 1000.1 M672.3 1054.0 L750.9 1042.2 M683.3 1095.4 L765.9 1083.0" stroke="#4d576c" stroke-width="1.5" fill="none" opacity="0.6" clip-path="url(#sf)" filter="url(#bl3)"/>
<path d="M618.3 682 H705.8 L897 1026 H745Z" fill="#f6f6f6"/>
<clipPath id="tf"><path d="M618.3 682 H705.8 L897 1026 H745Z"/></clipPath>
<path d="M621.4 682 L750.3 1026 M642.4 682 L786.8 1026 M663.4 682 L823.3 1026 M684.4 682 L859.8 1026 M622.9 694.6 L713.9 696.6 M629.1 711.4 L723.3 713.4 M635.4 728.6 L732.8 730.6 M642.0 746.5 L742.8 748.5 M648.6 764.3 L752.7 766.3 M655.7 783.7 L763.4 785.7 M663.5 804.8 L775.2 806.8 M671.8 827.5 L787.8 829.5 M680.8 851.8 L801.3 853.8 M690.3 877.7 L815.7 879.7 M701.1 906.9 L831.9 908.9 M713.0 939.3 L849.9 941.3 M725.5 973.4 L868.9 975.4 M739.2 1010.6 L889.6 1012.6" stroke="#8e8888" stroke-width="1.6" fill="none" opacity="0.6" clip-path="url(#tf)" filter="url(#bl3)"/>
<path d="M100 682 H187 L8 1005.6 V806Z" fill="#f4f4f4"/>
<clipPath id="lt"><path d="M100 682 H187 L8 1005.6 V806Z"/></clipPath>
<path d="M121.8 682 L-117.2 1026 M143.5 682 L-79.2 1026 M165.2 682 L-41.3 1026 M184.2 687.0 L-15.8 693.0 M177.7 698.8 L-22.3 704.8 M170.7 711.5 L-29.3 717.5 M163.1 725.2 L-36.9 731.2 M154.9 740.0 L-45.1 746.0 M146.0 756.1 L-54.0 762.1 M136.4 773.4 L-63.6 779.4 M126.1 792.2 L-73.9 798.2 M114.9 812.4 L-85.1 818.4 M102.7 834.3 L-97.3 840.3 M89.7 858.0 L-110.3 864.0 M75.5 883.5 L-124.5 889.5 M60.2 911.2 L-139.8 917.2 M43.7 941.1 L-156.3 947.1 M25.8 973.3 L-174.2 979.3 M6.5 1008.2 L-193.5 1014.2 M-14.3 1046.0 L-214.3 1052.0 M-36.9 1086.7 L-236.9 1092.7" stroke="#808080" stroke-width="1.2" fill="none" opacity="0.6" clip-path="url(#lt)" filter="url(#bl)"/>
<path d="M187 682 H255 L118.5 1026 H8 V1005.6Z" fill="#c8ccd0"/>
<clipPath id="ls"><path d="M187 682 H255 L118.5 1026 H8 V1005.6Z"/></clipPath>
<path d="M199.0 682 L18.8 1026 M220.9 682 L57.8 1026 M240.0 682 L92.1 1026 M184.2 687.0 L384.2 709.0 M177.7 698.8 L377.7 720.8 M170.7 711.5 L370.7 733.5 M163.1 725.2 L363.1 747.2 M154.9 740.0 L354.9 762.0 M146.0 756.1 L346.0 778.1 M136.4 773.4 L336.4 795.4 M126.1 792.2 L326.1 814.2 M114.9 812.4 L314.9 834.4 M102.7 834.3 L302.7 856.3 M89.7 858.0 L289.7 880.0 M75.5 883.5 L275.5 905.5 M60.2 911.2 L260.2 933.2 M43.7 941.1 L243.7 963.1 M25.8 973.3 L225.8 995.3 M6.5 1008.2 L206.5 1030.2 M-14.3 1046.0 L185.7 1068.0 M-36.9 1086.7 L163.1 1108.7" stroke="#62696f" stroke-width="1.1" fill="none" opacity="0.5" clip-path="url(#ls)" filter="url(#bl)"/>
<path d="M8 682 H100 L8 806Z" fill="#6b625d"/>
<rect x="23" y="712" width="200" height="200" fill="#4a4a4a" fill-opacity="0.47"/>
<rect x="44.500" y="728.500" width="157" height="27" rx="3.5" fill="#f5f5f5"/>
<rect x="44.500" y="775.500" width="157" height="27" rx="3.5" fill="#f5f5f5"/>
<text x="123" y="751" font-size="23.5" fill="#323232" text-anchor="middle" font-family="Liberation Sans, sans-serif">Host</text>
<text x="123" y="798" font-size="23.5" fill="#323232" text-anchor="middle" font-family="Liberation Sans, sans-serif">Client</text>
<text x="124" y="853.5" font-size="24" fill="#fafafa" text-anchor="middle" font-family="Liberation Sans, sans-serif">Players: 0</text>
</g></svg>
  </div>
  <!--GAME-->
  <!--HIER_S-->
<div class="tabbar" style="left:877px;top:81px;width:611px;height:19px"></div>
<div class="tab" style="left:877px;top:81px;width:96px;height:19px"></div>
<svg style="left:885px;top:86px" width="11" height="10" viewBox="0 0 11 10"><path d="M3 1 H11 M4.5 5 H11 M4.5 9 H11" stroke="#c4c4c4" stroke-width="1.3"/><path d="M0 1 H1.6 M2 5 H3.4 M2 9 H3.4" stroke="#c4c4c4" stroke-width="1.3"/></svg>
<div class="t" style="left:901px;top:83px;font-size:12.8px;">Hierarchy</div>
<svg style="left:1454px;top:85.5px" width="9" height="10" viewBox="0 0 9 10"><rect x="0.600" y="4.600" width="7.800" height="4.600" rx="0.600" fill="none" stroke="#c4c4c4" stroke-width="1.200"/><path d="M1.300 4.400 V2.800 A2.300 2.300 0 0 1 5.900 2.800 V3.600" fill="none" stroke="#c4c4c4" stroke-width="1.200"/></svg>
<svg style="left:1473px;top:85px" width="4" height="12" viewBox="0 0 4 12"><path d="M1 0.800 H3 V2.700 H1Z M1 4.400 H3 V6.300 H1Z M1 8 H3 V9.900 H1Z" fill="#c4c4c4"/></svg>
<div class="ptool" style="left:877px;top:100px;width:611px;height:20px"></div>
<svg style="left:884px;top:104px" width="24" height="12" viewBox="0 0 24 12"><path d="M6 0.5 V11.5 M0.5 6 H11.5" stroke="#c4c4c4" stroke-width="1.5"/><path d="M16 4.2 H23 L19.5 8.2Z" fill="#c4c4c4"/></svg>
<div class="inp" style="left:1159px;top:102px;width:326px;height:16px;background:#2a2a2a;border-color:#1f1f1f;overflow:hidden"><div class="a" style="left:308px;top:0;width:18px;height:14px;background:#3a3a3a"></div></div>
<svg style="left:1164px;top:106px" width="10" height="8" viewBox="0 0 10 8"><circle cx="3" cy="3" r="2.3" fill="none" stroke="#c4c4c4" stroke-width="1.1"/><path d="M4.8 4.8 L6.8 6.8" stroke="#c4c4c4" stroke-width="1.2"/><path d="M7 2.6 H10 L8.5 4.6Z" fill="#c4c4c4"/></svg>
<div class="t" style="left:1178px;top:102px;font-size:12px;color:#7a7a7a">All</div>
<svg style="left:1470px;top:103.500px" width="13" height="13" viewBox="0 0 13 13"><path d="M3.200 8 V1.600 Q3.200 0.600 4.200 0.600 H11.400 Q12.400 0.600 12.400 1.600 V8.800 Q12.400 9.800 11.400 9.800 H5" fill="none" stroke="#c4c4c4" stroke-width="1.100"/><rect x="0.600" y="8.400" width="4" height="4" fill="none" stroke="#c4c4c4" stroke-width="1.100"/><path d="M5 8 L9.800 3.200 M6.600 3 H10 V6.400" stroke="#c4c4c4" stroke-width="1.100" fill="none"/></svg>
<div class="panel" style="left:877px;top:120px;width:611px;height:520px"></div>
<div class="a" style="left:877px;top:120px;width:32px;height:520px;background:#323232"></div>
<div class="a" style="left:877px;top:120px;width:611px;height:16px;background:#2d2d2d"></div>
<div class="a" style="left:877px;top:249px;width:611px;height:16px;background:#4d4d4d"></div>
<svg style="left:911px;top:125px" width="10" height="8" viewBox="0 0 10 8"><path d="M0.5 0.8 H9.5 L5 7.5Z" fill="#707070"/></svg>
<svg style="left:924px;top:121px" width="14" height="14" viewBox="0 0 14 14"><path d="M7 0.5 L12.8 3.8 V10.2 L7 13.5 L1.2 10.2 V3.8Z" fill="#e8e8e8"/><path d="M7 7 V12.6 M7 7 L2 4.2 M7 7 L12 4.2" stroke="#2d2d2d" stroke-width="1.6"/><path d="M7 2.2 V4.6 M3 9.6 L5 8.4 M11 9.6 L9 8.4" stroke="#2d2d2d" stroke-width="1.1"/></svg>
<div class="t" style="left:942px;top:121px;font-size:13px;font-weight:bold;color:#d8d8d8;letter-spacing:0.25px">SampleScene*</div>
<svg style="left:1474px;top:123px" width="4" height="12" viewBox="0 0 4 12"><path d="M1 0.800 H3 V2.700 H1Z M1 4.400 H3 V6.300 H1Z M1 8 H3 V9.900 H1Z" fill="#c4c4c4"/></svg>
<svg style="left:937.5px;top:137px" width="14" height="15" viewBox="0 0 14 15"><path d="M7 0.8 L13.2 4 V11 L7 14.2 L0.8 11 V4Z M0.8 4 L7 7.2 L13.2 4 M7 7.2 V14.2" fill="none" stroke="#c4c4c4" stroke-width="1.1" stroke-linejoin="round"/></svg>
<div class="t" style="left:955px;top:137px;font-size:12.8px;">Main Camera</div>
<svg style="left:937.5px;top:153px" width="14" height="15" viewBox="0 0 14 15"><path d="M7 0.8 L13.2 4 V11 L7 14.2 L0.8 11 V4Z M0.8 4 L7 7.2 L13.2 4 M7 7.2 V14.2" fill="none" stroke="#c4c4c4" stroke-width="1.1" stroke-linejoin="round"/></svg>
<div class="t" style="left:955px;top:153px;font-size:12.8px;">Directional Light</div>
<svg style="left:937.5px;top:169px" width="14" height="15" viewBox="0 0 14 15"><path d="M7 0.8 L13.2 4 V11 L7 14.2 L0.8 11 V4Z M0.8 4 L7 7.2 L13.2 4 M7 7.2 V14.2" fill="none" stroke="#c4c4c4" stroke-width="1.1" stroke-linejoin="round"/></svg>
<div class="t" style="left:955px;top:169px;font-size:12.8px;">Plane</div>
<svg style="left:937.5px;top:185px" width="14" height="15" viewBox="0 0 14 15"><path d="M7 0.8 L13.2 4 V11 L7 14.2 L0.8 11 V4Z M0.8 4 L7 7.2 L13.2 4 M7 7.2 V14.2" fill="none" stroke="#c4c4c4" stroke-width="1.1" stroke-linejoin="round"/></svg>
<div class="t" style="left:955px;top:185px;font-size:12.8px;">Cube</div>
<svg style="left:937.5px;top:201px" width="14" height="15" viewBox="0 0 14 15"><path d="M7 0.8 L13.2 4 V11 L7 14.2 L0.8 11 V4Z M0.8 4 L7 7.2 L13.2 4 M7 7.2 V14.2" fill="none" stroke="#c4c4c4" stroke-width="1.1" stroke-linejoin="round"/></svg>
<div class="t" style="left:955px;top:201px;font-size:12.8px;">Cube (1)</div>
<svg style="left:937.5px;top:217px" width="14" height="15" viewBox="0 0 14 15"><path d="M7 0.8 L13.2 4 V11 L7 14.2 L0.8 11 V4Z M0.8 4 L7 7.2 L13.2 4 M7 7.2 V14.2" fill="none" stroke="#c4c4c4" stroke-width="1.1" stroke-linejoin="round"/></svg>
<div class="t" style="left:955px;top:217px;font-size:12.8px;">Cube (2)</div>
<svg style="left:937.5px;top:233px" width="14" height="15" viewBox="0 0 14 15"><path d="M7 0.8 L13.2 4 V11 L7 14.2 L0.8 11 V4Z M0.8 4 L7 7.2 L13.2 4 M7 7.2 V14.2" fill="none" stroke="#c4c4c4" stroke-width="1.1" stroke-linejoin="round"/></svg>
<div class="t" style="left:955px;top:233px;font-size:12.8px;">Network Manager</div>
<svg style="left:937.5px;top:249px" width="14" height="15" viewBox="0 0 14 15"><path d="M7 0.8 L13.2 4 V11 L7 14.2 L0.8 11 V4Z M0.8 4 L7 7.2 L13.2 4 M7 7.2 V14.2" fill="none" stroke="#c4c4c4" stroke-width="1.1" stroke-linejoin="round"/></svg>
<div class="t" style="left:955px;top:249px;font-size:12.8px;">Network UI</div>
<svg style="left:951.5px;top:265px" width="14" height="15" viewBox="0 0 14 15"><path d="M7 0.8 L13.2 4 V11 L7 14.2 L0.8 11 V4Z M0.8 4 L7 7.2 L13.2 4 M7 7.2 V14.2" fill="none" stroke="#c4c4c4" stroke-width="1.1" stroke-linejoin="round"/></svg>
<div class="t" style="left:969px;top:265px;font-size:12.8px;">Panel</div>
<svg style="left:965.5px;top:281px" width="14" height="15" viewBox="0 0 14 15"><path d="M7 0.8 L13.2 4 V11 L7 14.2 L0.8 11 V4Z M0.8 4 L7 7.2 L13.2 4 M7 7.2 V14.2" fill="none" stroke="#c4c4c4" stroke-width="1.1" stroke-linejoin="round"/></svg>
<div class="t" style="left:983px;top:281px;font-size:12.8px;">Host</div>
<svg style="left:965.5px;top:297px" width="14" height="15" viewBox="0 0 14 15"><path d="M7 0.8 L13.2 4 V11 L7 14.2 L0.8 11 V4Z M0.8 4 L7 7.2 L13.2 4 M7 7.2 V14.2" fill="none" stroke="#c4c4c4" stroke-width="1.1" stroke-linejoin="round"/></svg>
<div class="t" style="left:983px;top:297px;font-size:12.8px;">Client</div>
<svg style="left:965.5px;top:313px" width="14" height="15" viewBox="0 0 14 15"><path d="M7 0.8 L13.2 4 V11 L7 14.2 L0.8 11 V4Z M0.8 4 L7 7.2 L13.2 4 M7 7.2 V14.2" fill="none" stroke="#c4c4c4" stroke-width="1.1" stroke-linejoin="round"/></svg>
<div class="t" style="left:983px;top:313px;font-size:12.8px;">Text (TMP)</div>
<svg style="left:937.5px;top:329px" width="14" height="15" viewBox="0 0 14 15"><path d="M7 0.8 L13.2 4 V11 L7 14.2 L0.8 11 V4Z M0.8 4 L7 7.2 L13.2 4 M7 7.2 V14.2" fill="none" stroke="#c4c4c4" stroke-width="1.1" stroke-linejoin="round"/></svg>
<div class="t" style="left:955px;top:329px;font-size:12.8px;">EventSystem</div>
<svg style="left:925px;top:253px" width="10" height="8" viewBox="0 0 10 8"><path d="M0.5 0.8 H9.5 L5 7.5Z" fill="#707070"/></svg>
<svg style="left:939px;top:269px" width="10" height="8" viewBox="0 0 10 8"><path d="M0.5 0.8 H9.5 L5 7.5Z" fill="#707070"/></svg>
<svg style="left:955px;top:283px" width="8" height="10" viewBox="0 0 8 10"><path d="M0.8 0.5 V9.5 L7.5 5Z" fill="#707070"/></svg>
<svg style="left:955px;top:299px" width="8" height="10" viewBox="0 0 8 10"><path d="M0.8 0.5 V9.5 L7.5 5Z" fill="#707070"/></svg>
<!--HIER_E-->
  <!--PROJ_S-->
<div class="tabbar" style="left:877px;top:642px;width:611px;height:19px"></div>
<div class="tab" style="left:877px;top:642px;width:81px;height:19px"></div>
<svg style="left:884px;top:646px" width="13" height="11" viewBox="0 0 13 11"><path d="M0.5 1.5 Q0.5 0.5 1.5 0.5 H4.6 L6 2 H11.5 Q12.5 2 12.5 3 V9.6 Q12.5 10.6 11.5 10.6 H1.5 Q0.5 10.6 0.5 9.6Z" fill="#c4c4c4"/></svg>
<div class="t" style="left:901px;top:644px;font-size:12.8px;">Project</div>
<svg style="left:1454px;top:646.5px" width="9" height="10" viewBox="0 0 9 10"><rect x="0.600" y="4.600" width="7.800" height="4.600" rx="0.600" fill="none" stroke="#c4c4c4" stroke-width="1.200"/><path d="M1.300 4.400 V2.800 A2.300 2.300 0 0 1 5.900 2.800 V3.600" fill="none" stroke="#c4c4c4" stroke-width="1.200"/></svg>
<svg style="left:1473px;top:646px" width="4" height="12" viewBox="0 0 4 12"><path d="M1 0.800 H3 V2.700 H1Z M1 4.400 H3 V6.300 H1Z M1 8 H3 V9.900 H1Z" fill="#c4c4c4"/></svg>
<div class="ptool" style="left:877px;top:661px;width:611px;height:21px;border-bottom:1px solid #232323"></div>
<svg style="left:884px;top:665px" width="24" height="12" viewBox="0 0 24 12"><path d="M6 0.5 V11.5 M0.5 6 H11.5" stroke="#c4c4c4" stroke-width="1.5"/><path d="M16 4.2 H23 L19.5 8.2Z" fill="#c4c4c4"/></svg>
<div class="inp" style="left:1022px;top:663px;width:318px;height:16px;background:#2a2a2a;border-color:#1f1f1f;overflow:hidden"><div class="a" style="left:299px;top:0;width:18px;height:14px;background:#3a3a3a"></div></div>
<svg style="left:1027px;top:667px" width="8" height="8" viewBox="0 0 8 8"><circle cx="3" cy="3" r="2.3" fill="none" stroke="#c4c4c4" stroke-width="1.1"/><path d="M4.8 4.8 L7 7" stroke="#c4c4c4" stroke-width="1.2"/></svg>
<svg style="left:1325px;top:664px" width="13" height="13" viewBox="0 0 13 13"><path d="M3.200 8 V1.600 Q3.200 0.600 4.200 0.600 H11.400 Q12.400 0.600 12.400 1.600 V8.800 Q12.400 9.800 11.400 9.800 H5" fill="none" stroke="#c4c4c4" stroke-width="1.100"/><rect x="0.600" y="8.400" width="4" height="4" fill="none" stroke="#c4c4c4" stroke-width="1.100"/><path d="M5 8 L9.800 3.200 M6.600 3 H10 V6.400" stroke="#c4c4c4" stroke-width="1.100" fill="none"/></svg>
<div class="a" style="left:1342px;top:661px;width:1px;height:20px;background:#2a2a2a"></div>
<div class="a" style="left:1368px;top:661px;width:1px;height:20px;background:#2a2a2a"></div>
<div class="a" style="left:1394px;top:661px;width:1px;height:20px;background:#2a2a2a"></div>
<div class="a" style="left:1420px;top:661px;width:1px;height:20px;background:#2a2a2a"></div>
<div class="a" style="left:1446px;top:661px;width:1px;height:20px;background:#2a2a2a"></div>
<svg style="left:1348px;top:664px" width="14" height="13" viewBox="0 0 14 13"><rect x="2.500" y="0.300" width="5.500" height="5.500" fill="#c4c4c4"/><circle cx="4" cy="9" r="3.500" fill="#c4c4c4"/><path d="M7.600 8.800 L10.300 3.800 L13 8.800Z" fill="#c4c4c4"/></svg>
<svg style="left:1375px;top:665px" width="12" height="11" viewBox="0 0 12 11"><path d="M5.5 0.8 H11 V6 L6 10.6 L0.8 5.6Z" fill="#c4c4c4"/><circle cx="8.6" cy="3.2" r="1" fill="#3c3c3c"/></svg>
<svg style="left:1400px;top:664px" width="13" height="13" viewBox="0 0 13 13"><path d="M4 0.200 H9 L12.800 4 V9 L9 12.800 H4 L0.200 9 V4Z" fill="#c4c4c4"/><path d="M6.500 2.600 V7.800" stroke="#3c3c3c" stroke-width="1.500"/><circle cx="6.500" cy="10" r="0.900" fill="#3c3c3c"/></svg>
<svg style="left:1426px;top:664px" width="13" height="13" viewBox="0 0 13 13"><path d="M6.5 0.6 L8.2 4.7 L12.6 5 L9.2 7.9 L10.3 12.2 L6.5 9.8 L2.7 12.2 L3.8 7.9 L0.4 5 L4.8 4.7Z" fill="#8a8a8a"/></svg>
<svg style="left:1452px;top:665px" width="16" height="12" viewBox="0 0 16 12"><path d="M1 6 Q8 -0.6 15 6 Q8 12.6 1 6Z" fill="none" stroke="#c4c4c4" stroke-width="1.2"/><circle cx="8" cy="6" r="2" fill="#c4c4c4"/><path d="M2.5 11.5 L13.5 0.5" stroke="#c4c4c4" stroke-width="1.3"/></svg>
<div class="t" style="left:1468.5px;top:664px;font-size:12.8px;color:#8e8e8e">23</div>
<div class="panel" style="left:877px;top:682px;width:209px;height:344px"></div>
<div class="a" style="left:877px;top:921px;width:196px;height:16px;background:#4d4d4d"></div>
<div class="a" style="left:1073px;top:682px;width:12px;height:344px;background:#353535;border-left:1px solid #2c2c2c"></div>
<div class="a" style="left:1075px;top:698px;width:9px;height:259px;background:#5f5f5f;border-radius:4.5px"></div>
<svg style="left:1075px;top:687px" width="8" height="6" viewBox="0 0 8 6"><path d="M0.5 5.5 H7.5 L4 1Z" fill="#c4c4c4"/></svg>
<svg style="left:1075px;top:1015px" width="8" height="6" viewBox="0 0 8 6"><path d="M0.5 0.5 H7.5 L4 5Z" fill="#c4c4c4"/></svg>
<div class="a" style="left:1085px;top:682px;width:1px;height:344px;background:#232323"></div>
<div class="a" style="left:877px;top:681px;width:196px;height:345px;overflow:hidden">
<svg style="left:18px;top:3px" width="12" height="12" viewBox="0 0 13 13"><path d="M6.5 0.6 L8.2 4.7 L12.6 5 L9.2 7.9 L10.3 12.2 L6.5 9.8 L2.7 12.2 L3.8 7.9 L0.4 5 L4.8 4.7Z" fill="#c4c4c4"/></svg>
<svg style="left:4px;top:6px" width="10" height="8" viewBox="0 0 10 8"><path d="M0.5 0.8 H9.5 L5 7.5Z" fill="#707070"/></svg>
<div class="t" style="left:35px;top:1px;font-size:13px;font-weight:bold;color:#d0d0d0;letter-spacing:0.25px;">Favorites</div>
<svg style="left:32px;top:19px" width="13" height="13" viewBox="0 0 13 13"><circle cx="5.2" cy="5.2" r="4.2" fill="none" stroke="#c4c4c4" stroke-width="1.1"/><path d="M8.3 8.3 L12 12" stroke="#c4c4c4" stroke-width="1.3"/></svg>
<div class="t" style="left:48px;top:17px;font-size:12.8px;">All Materials</div>
<svg style="left:32px;top:35px" width="13" height="13" viewBox="0 0 13 13"><circle cx="5.2" cy="5.2" r="4.2" fill="none" stroke="#c4c4c4" stroke-width="1.1"/><path d="M8.3 8.3 L12 12" stroke="#c4c4c4" stroke-width="1.3"/></svg>
<div class="t" style="left:48px;top:33px;font-size:12.8px;">All Models</div>
<svg style="left:32px;top:51px" width="13" height="13" viewBox="0 0 13 13"><circle cx="5.2" cy="5.2" r="4.2" fill="none" stroke="#c4c4c4" stroke-width="1.1"/><path d="M8.3 8.3 L12 12" stroke="#c4c4c4" stroke-width="1.3"/></svg>
<div class="t" style="left:48px;top:49px;font-size:12.8px;">All Prefabs</div>
<svg style="left:18px;top:83px" width="15" height="11" viewBox="0 0 15 11"><path d="M1 10 V1.5 Q1 0.7 1.8 0.7 H4.6 L6 2.2 H11 Q11.8 2.2 11.8 3 V4" fill="none" stroke="#c4c4c4" stroke-width="1.1"/><path d="M3.4 4.4 H14.4 L11.8 10.5 H0.8Z" fill="#c4c4c4"/></svg>
<svg style="left:4px;top:85px" width="10" height="8" viewBox="0 0 10 8"><path d="M0.5 0.8 H9.5 L5 7.5Z" fill="#707070"/></svg>
<div class="t" style="left:35px;top:80px;font-size:13px;font-weight:bold;color:#d0d0d0;letter-spacing:0.25px;">Assets</div>
<svg style="left:32px;top:99px" width="13" height="11" viewBox="0 0 13 11"><path d="M0.5 1.5 Q0.5 0.5 1.5 0.5 H4.6 L6 2 H11.5 Q12.5 2 12.5 3 V9.6 Q12.5 10.6 11.5 10.6 H1.5 Q0.5 10.6 0.5 9.6Z" fill="#c4c4c4"/></svg>
<div class="t" style="left:48px;top:96px;font-size:12.8px;">Materials</div>
<svg style="left:32px;top:115px" width="13" height="11" viewBox="0 0 13 11"><path d="M0.5 1.5 Q0.5 0.5 1.5 0.5 H4.6 L6 2 H11.5 Q12.5 2 12.5 3 V9.6 Q12.5 10.6 11.5 10.6 H1.5 Q0.5 10.6 0.5 9.6Z" fill="#c4c4c4"/></svg>
<div class="t" style="left:48px;top:112px;font-size:12.8px;">Prefab</div>
<svg style="left:32px;top:131px" width="15" height="11" viewBox="0 0 15 11"><path d="M1 10 V1.5 Q1 0.7 1.8 0.7 H4.6 L6 2.2 H11 Q11.8 2.2 11.8 3 V4" fill="none" stroke="#c4c4c4" stroke-width="1.1"/><path d="M3.4 4.4 H14.4 L11.8 10.5 H0.8Z" fill="#c4c4c4"/></svg>
<svg style="left:18px;top:133px" width="10" height="8" viewBox="0 0 10 8"><path d="M0.5 0.8 H9.5 L5 7.5Z" fill="#707070"/></svg>
<div class="t" style="left:48px;top:128px;font-size:12.8px;">Samples</div>
<svg style="left:46px;top:147px" width="15" height="11" viewBox="0 0 15 11"><path d="M1 10 V1.5 Q1 0.7 1.8 0.7 H4.6 L6 2.2 H11 Q11.8 2.2 11.8 3 V4" fill="none" stroke="#c4c4c4" stroke-width="1.1"/><path d="M3.4 4.4 H14.4 L11.8 10.5 H0.8Z" fill="#c4c4c4"/></svg>
<svg style="left:32px;top:149px" width="10" height="8" viewBox="0 0 10 8"><path d="M0.5 0.8 H9.5 L5 7.5Z" fill="#707070"/></svg>
<div class="t" style="left:62px;top:144px;font-size:12.8px;">ProBuilder</div>
<svg style="left:60px;top:163px" width="15" height="11" viewBox="0 0 15 11"><path d="M1 10 V1.5 Q1 0.7 1.8 0.7 H4.6 L6 2.2 H11 Q11.8 2.2 11.8 3 V4" fill="none" stroke="#c4c4c4" stroke-width="1.1"/><path d="M3.4 4.4 H14.4 L11.8 10.5 H0.8Z" fill="#c4c4c4"/></svg>
<svg style="left:46px;top:165px" width="10" height="8" viewBox="0 0 10 8"><path d="M0.5 0.8 H9.5 L5 7.5Z" fill="#707070"/></svg>
<div class="t" style="left:76px;top:160px;font-size:12.8px;">5.0.7</div>
<svg style="left:74px;top:179px" width="15" height="11" viewBox="0 0 15 11"><path d="M1 10 V1.5 Q1 0.7 1.8 0.7 H4.6 L6 2.2 H11 Q11.8 2.2 11.8 3 V4" fill="none" stroke="#c4c4c4" stroke-width="1.1"/><path d="M3.4 4.4 H14.4 L11.8 10.5 H0.8Z" fill="#c4c4c4"/></svg>
<svg style="left:60px;top:181px" width="10" height="8" viewBox="0 0 10 8"><path d="M0.5 0.8 H9.5 L5 7.5Z" fill="#707070"/></svg>
<div class="t" style="left:90px;top:176px;font-size:12.8px;">Universal Render F</div>
<svg style="left:88px;top:195px" width="13" height="11" viewBox="0 0 13 11"><path d="M0.5 1.5 Q0.5 0.5 1.5 0.5 H4.6 L6 2 H11.5 Q12.5 2 12.5 3 V9.6 Q12.5 10.6 11.5 10.6 H1.5 Q0.5 10.6 0.5 9.6Z" fill="#c4c4c4"/></svg>
<div class="t" style="left:104px;top:192px;font-size:12.8px;">Material</div>
<svg style="left:88px;top:211px" width="13" height="11" viewBox="0 0 13 11"><path d="M0.5 1.5 Q0.5 0.5 1.5 0.5 H4.6 L6 2 H11.5 Q12.5 2 12.5 3 V9.6 Q12.5 10.6 11.5 10.6 H1.5 Q0.5 10.6 0.5 9.6Z" fill="#c4c4c4"/></svg>
<div class="t" style="left:104px;top:208px;font-size:12.8px;">Shader</div>
<svg style="left:32px;top:227px" width="13" height="11" viewBox="0 0 13 11"><path d="M0.5 1.5 Q0.5 0.5 1.5 0.5 H4.6 L6 2 H11.5 Q12.5 2 12.5 3 V9.6 Q12.5 10.6 11.5 10.6 H1.5 Q0.5 10.6 0.5 9.6Z" fill="#c4c4c4"/></svg>
<div class="t" style="left:48px;top:224px;font-size:12.8px;">Scenes</div>
<svg style="left:32px;top:243px" width="13" height="11" viewBox="0 0 13 11"><path d="M0.5 1.5 Q0.5 0.5 1.5 0.5 H4.6 L6 2 H11.5 Q12.5 2 12.5 3 V9.6 Q12.5 10.6 11.5 10.6 H1.5 Q0.5 10.6 0.5 9.6Z" fill="#c4c4c4"/></svg>
<div class="t" style="left:48px;top:240px;font-size:12.8px;">Scripts</div>
<svg style="left:32px;top:259px" width="15" height="11" viewBox="0 0 15 11"><path d="M1 10 V1.5 Q1 0.7 1.8 0.7 H4.6 L6 2.2 H11 Q11.8 2.2 11.8 3 V4" fill="none" stroke="#c4c4c4" stroke-width="1.1"/><path d="M3.4 4.4 H14.4 L11.8 10.5 H0.8Z" fill="#c4c4c4"/></svg>
<svg style="left:18px;top:261px" width="10" height="8" viewBox="0 0 10 8"><path d="M0.5 0.8 H9.5 L5 7.5Z" fill="#707070"/></svg>
<div class="t" style="left:48px;top:256px;font-size:12.8px;">TextMesh Pro</div>
<svg style="left:46px;top:275px" width="13" height="11" viewBox="0 0 13 11"><path d="M0.5 1.5 Q0.5 0.5 1.5 0.5 H4.6 L6 2 H11.5 Q12.5 2 12.5 3 V9.6 Q12.5 10.6 11.5 10.6 H1.5 Q0.5 10.6 0.5 9.6Z" fill="#c4c4c4"/></svg>
<div class="t" style="left:62px;top:272px;font-size:12.8px;">Documentation</div>
<svg style="left:46px;top:291px" width="13" height="11" viewBox="0 0 13 11"><path d="M0.5 1.5 Q0.5 0.5 1.5 0.5 H4.6 L6 2 H11.5 Q12.5 2 12.5 3 V9.6 Q12.5 10.6 11.5 10.6 H1.5 Q0.5 10.6 0.5 9.6Z" fill="#c4c4c4"/></svg>
<div class="t" style="left:62px;top:288px;font-size:12.8px;">Fonts</div>
<svg style="left:46px;top:307px" width="15" height="11" viewBox="0 0 15 11"><path d="M1 10 V1.5 Q1 0.7 1.8 0.7 H4.6 L6 2.2 H11 Q11.8 2.2 11.8 3 V4" fill="none" stroke="#c4c4c4" stroke-width="1.1"/><path d="M3.4 4.4 H14.4 L11.8 10.5 H0.8Z" fill="#c4c4c4"/></svg>
<svg style="left:32px;top:309px" width="10" height="8" viewBox="0 0 10 8"><path d="M0.5 0.8 H9.5 L5 7.5Z" fill="#707070"/></svg>
<div class="t" style="left:62px;top:304px;font-size:12.8px;">Resources</div>
<svg style="left:60px;top:323px" width="13" height="11" viewBox="0 0 13 11"><path d="M0.5 1.5 Q0.5 0.5 1.5 0.5 H4.6 L6 2 H11.5 Q12.5 2 12.5 3 V9.6 Q12.5 10.6 11.5 10.6 H1.5 Q0.5 10.6 0.5 9.6Z" fill="#c4c4c4"/></svg>
<div class="t" style="left:76px;top:320px;font-size:12.8px;">Fonts &amp; Materials</div>
<svg style="left:60px;top:339px" width="13" height="11" viewBox="0 0 13 11"><path d="M0.5 1.5 Q0.5 0.5 1.5 0.5 H4.6 L6 2 H11.5 Q12.5 2 12.5 3 V9.6 Q12.5 10.6 11.5 10.6 H1.5 Q0.5 10.6 0.5 9.6Z" fill="#c4c4c4"/></svg>
<div class="t" style="left:76px;top:336px;font-size:12.8px;">Sprite Assets</div>
</div>
<div class="a" style="left:1086px;top:682px;width:402px;height:344px;background:#333"></div>
<div class="a" style="left:1086px;top:682px;width:402px;height:21px;background:#3c3c3c"></div>
<div class="t" style="left:1090px;top:684px;font-size:12.8px;color:#a0a0a0">Assets</div>
<svg style="left:1136px;top:688px" width="6" height="9" viewBox="0 0 6 9"><path d="M1 0.8 L5 4.5 L1 8.2" fill="none" stroke="#a0a0a0" stroke-width="1.2"/></svg>
<div class="t" style="left:1147px;top:684px;font-size:13px;font-weight:bold;color:#d0d0d0;letter-spacing:0.25px">Scripts</div>
<svg style="left:1104px;top:704.5px" width="12" height="13.5" viewBox="0 0 12 14"><path d="M0.5 0.5 H8.5 L11.5 3.5 V13.5 H0.5Z" fill="#f3f3f3"/><path d="M4.700 3.300 L3.900 11.700 M8 3.300 L7.200 11.700 M2.100 6 H10.100 M1.800 9.200 H9.800" stroke="#1f7d30" stroke-width="1.350" fill="none"/></svg>
<div class="t" style="left:1120px;top:704px;font-size:12.8px;">NetworkUI</div>
<svg style="left:1104px;top:720.5px" width="12" height="13.5" viewBox="0 0 12 14"><path d="M0.5 0.5 H8.5 L11.5 3.5 V13.5 H0.5Z" fill="#f3f3f3"/><path d="M4.700 3.300 L3.900 11.700 M8 3.300 L7.200 11.700 M2.100 6 H10.100 M1.800 9.200 H9.800" stroke="#1f7d30" stroke-width="1.350" fill="none"/></svg>
<div class="t" style="left:1120px;top:720px;font-size:12.8px;letter-spacing:0.3px">PlayerManager</div>
<div class="a" style="left:1086px;top:1005px;width:402px;height:21px;background:#3c3c3c"></div>
<div class="a" style="left:1424px;top:1015px;width:48px;height:1px;background:#5e5e5e"></div>
<div class="a" style="left:1417px;top:1011px;width:10px;height:10px;border-radius:5px;background:#999"></div>
<!--PROJ_E-->
  <!--INSP_S-->
<div class="tabbar" style="left:1490px;top:81px;width:422px;height:19px"></div>
<div class="tab" style="left:1490px;top:81px;width:95px;height:19px;border-top:2px solid #2c5d87"></div>
<svg style="left:1498.5px;top:85px" width="11" height="11" viewBox="0 0 11 11"><circle cx="5.5" cy="5.5" r="5.4" fill="#c4c4c4"/><rect x="4.7" y="4.6" width="1.7" height="4" fill="#3c3c3c"/><circle cx="5.5" cy="2.9" r="1" fill="#3c3c3c"/></svg>
<div class="t" style="left:1514px;top:84px;font-size:12.8px;">Inspector</div>
<svg style="left:1885px;top:85.5px" width="9" height="10" viewBox="0 0 9 10"><rect x="0.600" y="4.600" width="7.800" height="4.600" rx="0.600" fill="none" stroke="#c4c4c4" stroke-width="1.200"/><path d="M1.300 4.400 V2.800 A2.300 2.300 0 0 1 5.900 2.800 V3.600" fill="none" stroke="#c4c4c4" stroke-width="1.200"/></svg>
<svg style="left:1904.5px;top:85px" width="4" height="12" viewBox="0 0 4 12"><path d="M1 0.800 H3 V2.700 H1Z M1 4.400 H3 V6.300 H1Z M1 8 H3 V9.900 H1Z" fill="#c4c4c4"/></svg>
<div class="a" style="left:1490px;top:100px;width:422px;height:59px;background:#3c3c3c"></div>
<div class="panel" style="left:1490px;top:159px;width:422px;height:867px"></div>
<svg style="left:1497.5px;top:111px" width="20" height="21" viewBox="0 0 20 21"><path d="M10 1 L19 5.5 V15.5 L10 20 L1 15.5 V5.5Z M1 5.5 L10 10 L19 5.5 M10 10 V20" fill="none" stroke="#c4c4c4" stroke-width="1.3" stroke-linejoin="round"/></svg>
<svg style="left:1516px;top:131px" width="7" height="5" viewBox="0 0 7 5"><path d="M0.3 0.5 H6.7 L3.5 4.5Z" fill="#c4c4c4"/></svg>
<div class="a" style="left:1538px;top:111px;width:14px;height:14px;background:#2a2a2a;border:1px solid #212121;border-radius:2px"></div><svg style="left:1540px;top:114px" width="10" height="8" viewBox="0 0 10 8"><path d="M1 4 L3.8 6.8 L9 1" fill="none" stroke="#e4e4e4" stroke-width="1.5"/></svg>
<div class="inp" style="left:1558px;top:109px;width:281px;height:18px"></div>
<div class="t" style="left:1561px;top:111px;font-size:13px;font-weight:bold;color:#d4d4d4;letter-spacing:0.3px">Network UI</div>
<div class="a" style="left:1842px;top:111px;width:14px;height:14px;background:#2a2a2a;border:1px solid #212121;border-radius:2px"></div>
<div class="t" style="left:1860px;top:110px;font-size:12.8px;">Static</div>
<svg style="left:1906px;top:116px" width="8" height="5" viewBox="0 0 8 5"><path d="M0.3 0.5 H7.7 L4 4.5Z" fill="#c4c4c4"/></svg>
<div class="t" style="left:1530.5px;top:134px;font-size:12.8px;">Tag</div>
<div class="a" style="left:1558px;top:134px;width:158px;height:17px;background:#515151;border:1px solid #303030;border-radius:3px"></div>
<div class="t" style="left:1561px;top:134px;font-size:12.8px;">Untagged</div>
<svg style="left:1703px;top:140px" width="8" height="5" viewBox="0 0 8 5"><path d="M0.3 0.5 H7.7 L4 4.5Z" fill="#c4c4c4"/></svg>
<div class="t" style="left:1729px;top:134px;font-size:12.8px;">Layer</div>
<div class="a" style="left:1769px;top:134px;width:150px;height:17px;background:#515151;border:1px solid #303030;border-radius:3px"></div>
<div class="t" style="left:1772px;top:134px;font-size:12.8px;">UI</div>
<svg style="left:1902px;top:140px" width="8" height="5" viewBox="0 0 8 5"><path d="M0.3 0.5 H7.7 L4 4.5Z" fill="#c4c4c4"/></svg>
<div class="a" style="left:1490px;top:159px;width:422px;height:1px;background:#1c1c1c"></div>
<div class="a" style="left:1490px;top:160px;width:422px;height:21px;background:#3e3e3e"></div>
<svg style="left:1497px;top:165.5px" width="8" height="10" viewBox="0 0 8 10"><path d="M0.8 0.5 V9.5 L7.5 5Z" fill="#707070"/></svg>
<svg style="left:1511px;top:162.5px" width="14" height="14" viewBox="0 0 14 14"><g fill="#c4c4c4"><path d="M1 0.5 L5.6 5 L4 5.8 L5 4.2Z M0.5 0.5 H3.6 L0.5 3.6Z"/><path d="M13.5 0.5 V3.6 L10.4 0.5Z"/><path d="M0.5 13.5 V10.4 L3.6 13.5Z"/><path d="M13.5 13.5 H10.4 L13.5 10.4Z"/></g><path d="M1.5 1.5 L5.4 5.4 M12.5 1.5 L8.6 5.4 M1.5 12.5 L5.4 8.6 M12.5 12.5 L8.6 8.6" stroke="#c4c4c4" stroke-width="1.6"/></svg>
<div class="t" style="left:1549.5px;top:162px;font-size:13px;font-weight:bold;color:#d0d0d0;letter-spacing:0.4px">Rect Transform</div>
<svg style="left:1862px;top:164.5px" width="11" height="11" viewBox="0 0 11 11"><circle cx="5.5" cy="5.5" r="5.3" fill="#c4c4c4"/><path d="M3.6 4.3 A1.9 1.9 0 1 1 5.5 6.2 V7.2" fill="none" stroke="#3e3e3e" stroke-width="1.3"/><circle cx="5.5" cy="8.8" r="0.8" fill="#3e3e3e"/></svg><svg style="left:1882px;top:164.5px" width="11" height="11" viewBox="0 0 11 11"><path d="M0 2.8 H5.5 M8.5 2.8 H11 M0 8.2 H2.5 M5.5 8.2 H11" stroke="#c4c4c4" stroke-width="1.2"/><path d="M7 0.5 V5.1 M4 5.9 V10.5" stroke="#c4c4c4" stroke-width="1.4"/></svg><svg style="left:1904.5px;top:164.0px" width="4" height="12" viewBox="0 0 4 12"><path d="M1 0.800 H3 V2.700 H1Z M1 4.400 H3 V6.300 H1Z M1 8 H3 V9.900 H1Z" fill="#c4c4c4"/></svg>
<div class="a" style="left:1490px;top:181px;width:422px;height:1px;background:#1c1c1c"></div>
<div class="a" style="left:1490px;top:182px;width:422px;height:21px;background:#3e3e3e"></div>
<svg style="left:1497px;top:187.5px" width="8" height="10" viewBox="0 0 8 10"><path d="M0.8 0.5 V9.5 L7.5 5Z" fill="#707070"/></svg>
<svg style="left:1511px;top:184.5px" width="14" height="14" viewBox="0 0 14 14"><rect x="2" y="3" width="10" height="8" fill="none" stroke="#c4c4c4" stroke-width="1.2"/><rect x="4" y="5" width="6" height="4" fill="#c4c4c4"/><path d="M0.5 3 V0.8 H3 M11 0.8 H13.5 V3 M0.5 11 V13.2 H3 M11 13.2 H13.5 V11" fill="none" stroke="#c4c4c4" stroke-width="1.1"/></svg>
<div class="a" style="left:1530px;top:185px;width:14px;height:14px;background:#2a2a2a;border:1px solid #212121;border-radius:2px"></div><svg style="left:1532px;top:188px" width="10" height="8" viewBox="0 0 10 8"><path d="M1 4 L3.8 6.8 L9 1" fill="none" stroke="#e4e4e4" stroke-width="1.5"/></svg>
<div class="t" style="left:1549.5px;top:184px;font-size:13px;font-weight:bold;color:#d0d0d0;letter-spacing:0.4px">Canvas</div>
<svg style="left:1862px;top:186.5px" width="11" height="11" viewBox="0 0 11 11"><circle cx="5.5" cy="5.5" r="5.3" fill="#c4c4c4"/><path d="M3.6 4.3 A1.9 1.9 0 1 1 5.5 6.2 V7.2" fill="none" stroke="#3e3e3e" stroke-width="1.3"/><circle cx="5.5" cy="8.8" r="0.8" fill="#3e3e3e"/></svg><svg style="left:1882px;top:186.5px" width="11" height="11" viewBox="0 0 11 11"><path d="M0 2.8 H5.5 M8.5 2.8 H11 M0 8.2 H2.5 M5.5 8.2 H11" stroke="#c4c4c4" stroke-width="1.2"/><path d="M7 0.5 V5.1 M4 5.9 V10.5" stroke="#c4c4c4" stroke-width="1.4"/></svg><svg style="left:1904.5px;top:186.0px" width="4" height="12" viewBox="0 0 4 12"><path d="M1 0.800 H3 V2.700 H1Z M1 4.400 H3 V6.300 H1Z M1 8 H3 V9.900 H1Z" fill="#c4c4c4"/></svg>
<div class="a" style="left:1490px;top:203px;width:422px;height:1px;background:#1c1c1c"></div>
<div class="a" style="left:1490px;top:204px;width:422px;height:21px;background:#3e3e3e"></div>
<svg style="left:1497px;top:209.5px" width="8" height="10" viewBox="0 0 8 10"><path d="M0.8 0.5 V9.5 L7.5 5Z" fill="#707070"/></svg>
<svg style="left:1511px;top:206.5px" width="14" height="14" viewBox="0 0 14 14"><rect x="0.6" y="1.6" width="12.8" height="11.4" fill="none" stroke="#c4c4c4" stroke-width="1.2"/><rect x="1.2" y="6" width="6" height="6.4" fill="#c4c4c4"/><path d="M1 4 H13" stroke="#c4c4c4" stroke-width="1"/></svg>
<div class="a" style="left:1530px;top:207px;width:14px;height:14px;background:#2a2a2a;border:1px solid #212121;border-radius:2px"></div><svg style="left:1532px;top:210px" width="10" height="8" viewBox="0 0 10 8"><path d="M1 4 L3.8 6.8 L9 1" fill="none" stroke="#e4e4e4" stroke-width="1.5"/></svg>
<div class="t" style="left:1549.5px;top:206px;font-size:13px;font-weight:bold;color:#d0d0d0;letter-spacing:0.4px">Canvas Scaler</div>
<svg style="left:1862px;top:208.5px" width="11" height="11" viewBox="0 0 11 11"><circle cx="5.5" cy="5.5" r="5.3" fill="#c4c4c4"/><path d="M3.6 4.3 A1.9 1.9 0 1 1 5.5 6.2 V7.2" fill="none" stroke="#3e3e3e" stroke-width="1.3"/><circle cx="5.5" cy="8.8" r="0.8" fill="#3e3e3e"/></svg><svg style="left:1882px;top:208.5px" width="11" height="11" viewBox="0 0 11 11"><path d="M0 2.8 H5.5 M8.5 2.8 H11 M0 8.2 H2.5 M5.5 8.2 H11" stroke="#c4c4c4" stroke-width="1.2"/><path d="M7 0.5 V5.1 M4 5.9 V10.5" stroke="#c4c4c4" stroke-width="1.4"/></svg><svg style="left:1904.5px;top:208.0px" width="4" height="12" viewBox="0 0 4 12"><path d="M1 0.800 H3 V2.700 H1Z M1 4.400 H3 V6.300 H1Z M1 8 H3 V9.900 H1Z" fill="#c4c4c4"/></svg>
<div class="a" style="left:1490px;top:225px;width:422px;height:1px;background:#1c1c1c"></div>
<div class="a" style="left:1490px;top:226px;width:422px;height:21px;background:#3e3e3e"></div>
<svg style="left:1497px;top:231.5px" width="8" height="10" viewBox="0 0 8 10"><path d="M0.8 0.5 V9.5 L7.5 5Z" fill="#707070"/></svg>
<svg style="left:1511px;top:228.5px" width="14" height="14" viewBox="0 0 14 14"><rect x="3.6" y="3.6" width="7.4" height="7.4" fill="none" stroke="#c4c4c4" stroke-width="1.2"/><g fill="#c4c4c4"><rect x="2.4" y="2.4" width="2.6" height="2.6"/><rect x="9.6" y="2.4" width="2.6" height="2.6"/><rect x="2.4" y="9.6" width="2.6" height="2.6"/><rect x="9.6" y="9.6" width="2.6" height="2.6"/></g><path d="M0.3 0.3 L2.4 2.4 M12.2 12.2 L13.8 13.8" stroke="#3d8fd0" stroke-width="1.1"/></svg>
<div class="a" style="left:1530px;top:229px;width:14px;height:14px;background:#2a2a2a;border:1px solid #212121;border-radius:2px"></div><svg style="left:1532px;top:232px" width="10" height="8" viewBox="0 0 10 8"><path d="M1 4 L3.8 6.8 L9 1" fill="none" stroke="#e4e4e4" stroke-width="1.5"/></svg>
<div class="t" style="left:1549.5px;top:228px;font-size:13px;font-weight:bold;color:#d0d0d0;letter-spacing:0.4px">Graphic Raycaster</div>
<svg style="left:1862px;top:230.5px" width="11" height="11" viewBox="0 0 11 11"><circle cx="5.5" cy="5.5" r="5.3" fill="#c4c4c4"/><path d="M3.6 4.3 A1.9 1.9 0 1 1 5.5 6.2 V7.2" fill="none" stroke="#3e3e3e" stroke-width="1.3"/><circle cx="5.5" cy="8.8" r="0.8" fill="#3e3e3e"/></svg><svg style="left:1882px;top:230.5px" width="11" height="11" viewBox="0 0 11 11"><path d="M0 2.8 H5.5 M8.5 2.8 H11 M0 8.2 H2.5 M5.5 8.2 H11" stroke="#c4c4c4" stroke-width="1.2"/><path d="M7 0.5 V5.1 M4 5.9 V10.5" stroke="#c4c4c4" stroke-width="1.4"/></svg><svg style="left:1904.5px;top:230.0px" width="4" height="12" viewBox="0 0 4 12"><path d="M1 0.800 H3 V2.700 H1Z M1 4.400 H3 V6.300 H1Z M1 8 H3 V9.900 H1Z" fill="#c4c4c4"/></svg>
<div class="a" style="left:1490px;top:247px;width:422px;height:1px;background:#1c1c1c"></div>
<div class="a" style="left:1490px;top:248px;width:422px;height:21px;background:#3e3e3e"></div>
<svg style="left:1496px;top:255px" width="10" height="8" viewBox="0 0 10 8"><path d="M0.5 0.8 H9.5 L5 7.5Z" fill="#707070"/></svg>
<svg style="left:1511.5px;top:250.5px" width="12" height="14" viewBox="0 0 12 14"><path d="M0.5 0.5 H8.5 L11.5 3.5 V13.5 H0.5Z" fill="#f3f3f3"/><path d="M4.700 3.300 L3.900 11.700 M8 3.300 L7.200 11.700 M2.100 6 H10.100 M1.800 9.200 H9.800" stroke="#1f7d30" stroke-width="1.350" fill="none"/></svg>
<div class="a" style="left:1530px;top:251px;width:14px;height:14px;background:#2a2a2a;border:1px solid #212121;border-radius:2px"></div><svg style="left:1532px;top:254px" width="10" height="8" viewBox="0 0 10 8"><path d="M1 4 L3.8 6.8 L9 1" fill="none" stroke="#e4e4e4" stroke-width="1.5"/></svg>
<div class="t" style="left:1549.5px;top:250px;font-size:13px;font-weight:bold;color:#d0d0d0;letter-spacing:0.4px">Network UI (Script)</div>
<svg style="left:1862px;top:252.5px" width="11" height="11" viewBox="0 0 11 11"><circle cx="5.5" cy="5.5" r="5.3" fill="#c4c4c4"/><path d="M3.6 4.3 A1.9 1.9 0 1 1 5.5 6.2 V7.2" fill="none" stroke="#3e3e3e" stroke-width="1.3"/><circle cx="5.5" cy="8.8" r="0.8" fill="#3e3e3e"/></svg><svg style="left:1882px;top:252.5px" width="11" height="11" viewBox="0 0 11 11"><path d="M0 2.8 H5.5 M8.5 2.8 H11 M0 8.2 H2.5 M5.5 8.2 H11" stroke="#c4c4c4" stroke-width="1.2"/><path d="M7 0.5 V5.1 M4 5.9 V10.5" stroke="#c4c4c4" stroke-width="1.4"/></svg><svg style="left:1904.5px;top:252.0px" width="4" height="12" viewBox="0 0 4 12"><path d="M1 0.800 H3 V2.700 H1Z M1 4.400 H3 V6.300 H1Z M1 8 H3 V9.900 H1Z" fill="#c4c4c4"/></svg>
<div class="a" style="left:1490px;top:340px;width:422px;height:1px;background:#1c1c1c"></div>
<div class="a" style="left:1490px;top:341px;width:422px;height:21px;background:#3e3e3e"></div>
<svg style="left:1496px;top:348px" width="10" height="8" viewBox="0 0 10 8"><path d="M0.5 0.8 H9.5 L5 7.5Z" fill="#707070"/></svg>
<svg style="left:1511.5px;top:343.5px" width="12" height="14" viewBox="0 0 12 14"><path d="M0.5 0.5 H8.5 L11.5 3.5 V13.5 H0.5Z" fill="#f3f3f3"/><path d="M4.700 3.300 L3.900 11.700 M8 3.300 L7.200 11.700 M2.100 6 H10.100 M1.800 9.200 H9.800" stroke="#1f7d30" stroke-width="1.350" fill="none"/></svg>
<div class="a" style="left:1530px;top:344px;width:14px;height:14px;background:#2a2a2a;border:1px solid #212121;border-radius:2px"></div><svg style="left:1532px;top:347px" width="10" height="8" viewBox="0 0 10 8"><path d="M1 4 L3.8 6.8 L9 1" fill="none" stroke="#e4e4e4" stroke-width="1.5"/></svg>
<div class="t" style="left:1549.5px;top:343px;font-size:13px;font-weight:bold;color:#d0d0d0;letter-spacing:0.4px">Network Object</div>
<svg style="left:1862px;top:345.5px" width="11" height="11" viewBox="0 0 11 11"><circle cx="5.5" cy="5.5" r="5.3" fill="#c4c4c4"/><path d="M3.6 4.3 A1.9 1.9 0 1 1 5.5 6.2 V7.2" fill="none" stroke="#3e3e3e" stroke-width="1.3"/><circle cx="5.5" cy="8.8" r="0.8" fill="#3e3e3e"/></svg><svg style="left:1882px;top:345.5px" width="11" height="11" viewBox="0 0 11 11"><path d="M0 2.8 H5.5 M8.5 2.8 H11 M0 8.2 H2.5 M5.5 8.2 H11" stroke="#c4c4c4" stroke-width="1.2"/><path d="M7 0.5 V5.1 M4 5.9 V10.5" stroke="#c4c4c4" stroke-width="1.4"/></svg><svg style="left:1904.5px;top:345.0px" width="4" height="12" viewBox="0 0 4 12"><path d="M1 0.800 H3 V2.700 H1Z M1 4.400 H3 V6.300 H1Z M1 8 H3 V9.900 H1Z" fill="#c4c4c4"/></svg>
<div class="t" style="left:1509px;top:275px;font-size:12.8px;color:#7c7c7c">Script</div>
<div class="inp" style="left:1663px;top:273px;width:252px;height:18px;background:#333;border-color:#2a2a2a"></div>
<svg style="left:1668px;top:277px;opacity:0.55" width="9" height="11" viewBox="0 0 12 14"><path d="M0.5 0.5 H8.5 L11.5 3.5 V13.5 H0.5Z" fill="#d8d8d8"/><path d="M4.2 4 L3.6 11 M7.6 4 L7 11 M2.2 6 H9.6 M1.9 9 H9.3" stroke="#2f8a3c" stroke-width="1.4" fill="none"/></svg>
<div class="t" style="left:1679px;top:275px;font-size:12.8px;color:#7c7c7c">NetworkUI</div>
<div class="a" style="left:1896px;top:274px;width:16px;height:16px;background:#383838"></div>
<svg style="left:1900.5px;top:277px" width="10" height="10" viewBox="0 0 10 10"><circle cx="5" cy="5" r="4.2" fill="none" stroke="#7c7c7c" stroke-width="1"/><circle cx="5" cy="5" r="1.5" fill="#7c7c7c"/></svg>
<div class="t" style="left:1509px;top:295px;font-size:12.8px;color:#c4c4c4">Host Button</div>
<div class="inp" style="left:1663px;top:293px;width:252px;height:18px;background:#2a2a2a;border-color:#212121"></div>
<svg style="left:1667.5px;top:298px" width="9" height="9" viewBox="0 0 9 9"><circle cx="4.5" cy="4.5" r="4.2" fill="#c8c8c8"/><circle cx="4.5" cy="4.5" r="2.9" fill="none" stroke="#2a2a2a" stroke-width="0.8"/></svg>
<div class="t" style="left:1679px;top:295px;font-size:12.8px;color:#c4c4c4">Host (Button)</div>
<div class="a" style="left:1896px;top:294px;width:16px;height:16px;background:#383838"></div>
<svg style="left:1900.5px;top:297px" width="10" height="10" viewBox="0 0 10 10"><circle cx="5" cy="5" r="4.2" fill="none" stroke="#c4c4c4" stroke-width="1"/><circle cx="5" cy="5" r="1.5" fill="#c4c4c4"/></svg>
<div class="t" style="left:1509px;top:315px;font-size:12.8px;color:#c4c4c4">Client Button</div>
<div class="inp" style="left:1663px;top:313px;width:252px;height:18px;background:#2a2a2a;border-color:#212121"></div>
<svg style="left:1667.5px;top:318px" width="9" height="9" viewBox="0 0 9 9"><circle cx="4.5" cy="4.5" r="4.2" fill="#c8c8c8"/><circle cx="4.5" cy="4.5" r="2.9" fill="none" stroke="#2a2a2a" stroke-width="0.8"/></svg>
<div class="t" style="left:1679px;top:315px;font-size:12.8px;color:#c4c4c4">Client (Button)</div>
<div class="a" style="left:1896px;top:314px;width:16px;height:16px;background:#383838"></div>
<svg style="left:1900.5px;top:317px" width="10" height="10" viewBox="0 0 10 10"><circle cx="5" cy="5" r="4.2" fill="none" stroke="#c4c4c4" stroke-width="1"/><circle cx="5" cy="5" r="1.5" fill="#c4c4c4"/></svg>
<div class="t" style="left:1509px;top:368px;font-size:12.8px;width:152px;overflow:hidden">Always Replicate As Root</div>
<div class="a" style="left:1663px;top:368px;width:14px;height:14px;background:#2a2a2a;border:1px solid #212121;border-radius:2px"></div>
<div class="t" style="left:1509px;top:388px;font-size:12.8px;width:152px;overflow:hidden">Synchronize Transform</div>
<div class="a" style="left:1663px;top:388px;width:14px;height:14px;background:#2a2a2a;border:1px solid #212121;border-radius:2px"></div><svg style="left:1665px;top:391px" width="10" height="8" viewBox="0 0 10 8"><path d="M1 4 L3.8 6.8 L9 1" fill="none" stroke="#e4e4e4" stroke-width="1.5"/></svg>
<div class="t" style="left:1509px;top:408px;font-size:12.8px;width:152px;overflow:hidden">Active Scene Synchronization</div>
<div class="a" style="left:1663px;top:408px;width:14px;height:14px;background:#2a2a2a;border:1px solid #212121;border-radius:2px"></div>
<div class="t" style="left:1509px;top:428px;font-size:12.8px;width:152px;overflow:hidden">Scene Migration Synchronization</div>
<div class="a" style="left:1663px;top:428px;width:14px;height:14px;background:#2a2a2a;border:1px solid #212121;border-radius:2px"></div><svg style="left:1665px;top:431px" width="10" height="8" viewBox="0 0 10 8"><path d="M1 4 L3.8 6.8 L9 1" fill="none" stroke="#e4e4e4" stroke-width="1.5"/></svg>
<div class="t" style="left:1509px;top:448px;font-size:12.8px;width:152px;overflow:hidden">Spawn With Observers</div>
<div class="a" style="left:1663px;top:448px;width:14px;height:14px;background:#2a2a2a;border:1px solid #212121;border-radius:2px"></div><svg style="left:1665px;top:451px" width="10" height="8" viewBox="0 0 10 8"><path d="M1 4 L3.8 6.8 L9 1" fill="none" stroke="#e4e4e4" stroke-width="1.5"/></svg>
<div class="t" style="left:1509px;top:468px;font-size:12.8px;width:152px;overflow:hidden">Dont Destroy With Owner</div>
<div class="a" style="left:1663px;top:468px;width:14px;height:14px;background:#2a2a2a;border:1px solid #212121;border-radius:2px"></div>
<div class="t" style="left:1509px;top:488px;font-size:12.8px;width:152px;overflow:hidden">Auto Object Parent Sync</div>
<div class="a" style="left:1663px;top:488px;width:14px;height:14px;background:#2a2a2a;border:1px solid #212121;border-radius:2px"></div><svg style="left:1665px;top:491px" width="10" height="8" viewBox="0 0 10 8"><path d="M1 4 L3.8 6.8 L9 1" fill="none" stroke="#e4e4e4" stroke-width="1.5"/></svg>
<div class="t" style="left:1509px;top:508px;font-size:12.8px;color:#7c7c7c">GlobalObjectIdHash</div>
<div class="inp" style="left:1663px;top:506px;width:252px;height:18px;background:#333;border-color:#2a2a2a"></div>
<div class="t" style="left:1666px;top:508px;font-size:12.8px;color:#7c7c7c">358030168</div>
<div class="t" style="left:1509px;top:528px;font-size:12.8px;color:#7c7c7c">NetworkManager</div>
<div class="inp" style="left:1663px;top:526px;width:252px;height:18px;background:#333;border-color:#2a2a2a"></div>
<div class="t" style="left:1666px;top:528px;font-size:12.8px;color:#7c7c7c">null</div>
<div class="a" style="left:1490px;top:553px;width:422px;height:1px;background:#1c1c1c"></div>
<div class="a" style="left:1590px;top:562px;width:230px;height:24px;background:#585858;border:1px solid #303030;border-radius:3px"></div>
<div class="t" style="left:1591px;top:566px;width:228px;text-align:center;font-size:12.8px;color:#dcdcdc">Add Component</div>
<!--INSP_E-->
  
  <!-- STATUS BAR -->
  <div class="a" style="left:0;top:1026px;width:1912px;height:14px;background:#191919;overflow:hidden">
    <svg style="left:3px;top:4px" width="13" height="13" viewBox="0 0 13 13"><circle cx="6.5" cy="6.5" r="6.5" fill="#e8e8e8"/><path d="M6.5 2.6 V7.8" stroke="#191919" stroke-width="1.8"/><circle cx="6.5" cy="10.2" r="1.1" fill="#191919"/></svg>
    <div class="t" style="left:20px;top:3px;font-size:12.8px">[TMP Essential Resources] have been imported</div>
    <svg style="left:1819px;top:4px" width="16" height="12" viewBox="0 0 16 12"><ellipse cx="8" cy="5" rx="5" ry="4" fill="#c0c0c0"/><path d="M1 0 L15 10" stroke="#c0c0c0" stroke-width="1.4"/></svg>
    <svg style="left:1847px;top:4px" width="16" height="12" viewBox="0 0 16 12"><ellipse cx="8" cy="4.5" rx="6.5" ry="3.5" fill="#c4c4c4"/><path d="M1.5 6 Q8 12 14.5 6 V9 Q8 14 1.5 9Z" fill="#c4c4c4"/></svg>
    <svg style="left:1872px;top:4px" width="16" height="12" viewBox="0 0 16 12"><circle cx="8" cy="6" r="4.5" fill="none" stroke="#c0c0c0" stroke-width="1.3"/><path d="M1 0 L15 11 M3 6 H13" stroke="#c0c0c0" stroke-width="1.2"/></svg>
    <svg style="left:1899px;top:3px" width="16" height="16" viewBox="0 0 16 16"><circle cx="8" cy="8" r="6.5" fill="none" stroke="#c4c4c4" stroke-width="1.2"/><path d="M5 8 L7.3 10.3 L11.5 5.8" stroke="#c4c4c4" stroke-width="1.2" fill="none"/></svg>
  </div>

</div>

<!-- TASKBAR -->
<div class="a" id="taskbar" style="left:0;top:1040px;width:1920px;height:40px;background:#1b1b1b;will-change:transform;font-family:'Liberation Sans',sans-serif">
  <svg style="left:16px;top:12px" width="16" height="16" viewBox="0 0 16 16"><path d="M0 2.3 L6.6 1.4 V7.6 H0Z M7.5 1.25 L16 0 V7.6 H7.5Z M0 8.5 H6.6 V14.7 L0 13.8Z M7.5 8.5 H16 V16 L7.5 14.8Z" fill="#fff"/></svg>
  <div class="a" style="left:48px;top:0;width:288px;height:40px;background:#343434;border:1px solid #484848;border-bottom:none"></div>
  <svg style="left:60px;top:12px" width="17" height="17" viewBox="0 0 17 17"><circle cx="10.3" cy="6.3" r="5.2" fill="none" stroke="#e8e8e8" stroke-width="1.4"/><path d="M6.6 10 L0.8 15.8" stroke="#e8e8e8" stroke-width="1.5"/></svg>
  <div class="t" style="left:88px;top:10px;font-size:14.3px;line-height:20px;height:20px;color:#f0f0f0">Escriu aquí per cercar</div>
  <!-- search highlight image -->
  <svg style="left:256px;top:1px" width="80" height="39" viewBox="256 1041 80 39">
    <path d="M269 1071 H325 L336 1076 V1080 H257 V1077Z" fill="#e7bf8c"/><path d="M257 1077 H336 V1080 H257Z" fill="#d3a777"/>
    <path d="M270 1059 L283 1055 L297 1053 L300 1069 L286 1072 L274 1075Z" fill="#f1f1f1" stroke="#3c9a4a" stroke-width="1.6"/><path d="M284 1056 L287 1071" stroke="#9aa" stroke-width="1"/>
    <path d="M288 1060 L296 1049 L299 1051 L291 1062Z" fill="#f0b23a"/><path d="M296 1049 L298 1046.500 L300.500 1048.500 L299 1051Z" fill="#e0574a"/>
    <path d="M306 1060 Q306 1048 315.500 1048 Q325 1048 325 1060 V1069 Q325 1073 321 1073 H310 Q306 1073 306 1069Z" fill="#2d7be8"/><path d="M311 1050 Q315.500 1041 320 1050" fill="none" stroke="#1f5cc0" stroke-width="2"/><rect x="309" y="1061" width="13" height="10" rx="3" fill="#4aa0ff"/><path d="M307 1070 Q315 1076 324 1070" stroke="#b060d0" stroke-width="1.5" fill="none"/>
  </svg>
  <svg style="left:351px;top:11px" width="18" height="18" viewBox="0 0 18 18"><circle cx="9" cy="9" r="6.600" fill="none" stroke="#fff" stroke-width="2.600"/></svg>
  <svg style="left:399px;top:12px" width="17" height="16" viewBox="0 0 17 16"><path d="M0.500 0.700 H10 M0.500 15.300 H10" stroke="#fff" stroke-width="1.200"/><rect x="1" y="3.500" width="9.500" height="9" fill="none" stroke="#fff" stroke-width="1.300"/><path d="M14 0 V4.500 M14 6 V16" stroke="#fff" stroke-width="1.400"/><rect x="13" y="5" width="3" height="2.500" fill="#fff"/></svg>
  <!-- xampp -->
  <svg style="left:447px;top:8px" width="25" height="25" viewBox="0 0 25 25"><rect x="0.500" y="0.500" width="24" height="24" rx="3.500" fill="#f37a20"/><path d="M6 8.500 Q6 6 8.500 6 Q10.500 6 12.500 8.500 Q14.500 6 16.500 6 Q19 6 19 8.500 Q19 10.500 17 12.500 Q19 14.500 19 16.500 Q19 19 16.500 19 Q14.500 19 12.500 16.500 Q10.500 19 8.500 19 Q6 19 6 16.500 Q6 14.500 8 12.500 Q6 10.500 6 8.500Z" fill="none" stroke="#fff" stroke-width="2.600"/></svg>
  <!-- file explorer -->
  <svg style="left:497px;top:9px" width="23" height="21" viewBox="0 0 23 21"><path d="M0.500 2 H8 L10 4 H22 V19 H0.500Z" fill="#f5c33b"/><path d="M0.500 7 H22 V19 H0.500Z" fill="#fbd867"/><path d="M7 19 V14 H15.500 V19" fill="none" stroke="#3b8ed8" stroke-width="2.400"/><rect x="8" y="17" width="7" height="2.500" fill="#3b8ed8"/></svg>
  <div class="a" style="left:488px;top:38px;width:40px;height:2px;background:#76b9ed"></div>
  <!-- chrome -->
  <svg style="left:545px;top:8px" width="24" height="24" viewBox="0 0 24 24"><circle cx="12" cy="12" r="12" fill="#4caf50"/><path d="M12 12 L1.600 6 A12 12 0 0 1 22.400 6Z" fill="#e53935"/><path d="M12 12 L22.400 6 A12 12 0 0 1 12 24Z" fill="#fdd835"/><path d="M12 12 L1.600 6 A12 12 0 0 0 12 24 L17 14Z" fill="#43a047"/><path d="M12 6.500 H22.400 A12 12 0 0 0 1.600 6 L6.800 14.500Z" fill="#e53935"/><circle cx="12" cy="12" r="5.600" fill="#fff"/><circle cx="12" cy="12" r="4.400" fill="#4285f4"/></svg>
  <!-- vscode -->
  <svg style="left:594px;top:8px" width="25" height="24" viewBox="0 0 25 24"><path d="M18 0.500 L24.500 3.500 V20.500 L18 23.500 L6 12Z" fill="#2aa0f0"/><path d="M18 6.500 V17.500 L10.500 12Z" fill="#1b1b1b"/><path d="M0.500 8 L3 6 L18 17.500 V23.500Z" fill="#1a7fd0"/><path d="M0.500 16 L3 18 L18 6.500 V0.500Z" fill="#1f8de0"/></svg>
  <!-- chrome 2 -->
  <svg style="left:643px;top:8px" width="26" height="26" viewBox="0 0 26 26"><circle cx="12" cy="12" r="12" fill="#4caf50"/><path d="M12 12 L22.400 6 A12 12 0 0 1 12 24Z" fill="#fdd835"/><path d="M12 12 L1.600 6 A12 12 0 0 0 12 24 L17 14Z" fill="#43a047"/><path d="M12 6.500 H22.400 A12 12 0 0 0 1.600 6 L6.800 14.500Z" fill="#e53935"/><circle cx="12" cy="12" r="5.600" fill="#fff"/><circle cx="12" cy="12" r="4.400" fill="#4285f4"/><circle cx="18.500" cy="19" r="6.500" fill="#222"/><circle cx="19.500" cy="20.500" r="3.600" fill="#e8c9b0"/></svg>
  <div class="a" style="left:635px;top:38px;width:40px;height:2px;background:#76b9ed"></div>
  <!-- unity active -->
  <div class="a" style="left:680px;top:0;width:44px;height:40px;background:#3e3e3e"></div>
  <div class="a" style="left:724px;top:0;width:4px;height:40px;background:#2c2c2c"></div>
  <div class="a" style="left:680px;top:38px;width:48px;height:2px;background:#76b9ed"></div>
  <svg style="left:695px;top:11px" width="19" height="20" viewBox="0 0 19 20"><path d="M9.500 0.500 L18.300 5.300 V14.700 L9.500 19.500 L0.700 14.700 V5.300Z" fill="#f4f4f4"/><path d="M9.500 19.500 L18.300 14.700 V5.300 L15 7.200 V12.800 L9.500 16Z" fill="#151515"/><path d="M9.500 10 V16.500 M9.500 10 L3.800 6.800 M9.500 10 L15.200 6.800" stroke="#2b2b2b" stroke-width="2.200"/><path d="M9.500 3.200 V5.800 M4 13.400 L6.200 12.200" stroke="#2b2b2b" stroke-width="1.400"/></svg>
  <!-- photoshop -->
  <div class="a" style="left:742px;top:9px;width:22px;height:22px;background:#0c1a5e;border:1.500px solid #8ab4f8"></div>
  <div class="t" style="left:742px;top:12px;width:22px;text-align:center;font-size:13px;font-weight:bold;color:#9cc4ff">Ps</div>
  <div class="a" style="left:733px;top:38px;width:40px;height:2px;background:#76b9ed"></div>
  <!-- visual studio -->
  <svg style="left:790px;top:8px" width="25" height="24" viewBox="0 0 25 24"><path d="M17.500 0.500 L24.500 3.500 V20.500 L17.500 23.500 L5 12Z" fill="#a775e0"/><path d="M17.500 6.500 V17.500 L10.500 12Z" fill="#1b1b1b"/><path d="M0.500 7 L3 5.500 L17.500 17.500 V23.500Z" fill="#8656c8"/><path d="M0.500 17 L3 18.500 L17.500 6.500 V0.500Z" fill="#9666d6"/><path d="M0.500 7 V17 L3 18.500 V5.500Z" fill="#7040b0"/></svg>
  <div class="a" style="left:782px;top:38px;width:40px;height:2px;background:#76b9ed"></div>
  <!-- tray -->
  <svg style="left:1535px;top:10px" width="20" height="20" viewBox="0 0 20 20"><defs><linearGradient id="sun" x1="0" y1="0" x2="1" y2="1"><stop offset="0" stop-color="#fbb72c"/><stop offset="1" stop-color="#ee6a10"/></linearGradient></defs><circle cx="10" cy="10" r="10" fill="url(#sun)"/></svg>
  <div class="t" style="left:1565px;top:10px;font-size:13.2px;line-height:20px;height:20px;color:#f4f4f4">14°C</div>
  <div class="t" style="left:1603px;top:10px;font-size:13.5px;line-height:20px;height:20px;color:#f4f4f4">Soleado</div>
  <svg style="left:1677px;top:16px" width="12" height="8" viewBox="0 0 12 8"><path d="M0.500 7 L6 1.200 L11.500 7" fill="none" stroke="#fff" stroke-width="1.300"/></svg>
  <svg style="left:1698px;top:13px" width="18" height="13" viewBox="0 0 18 13"><rect x="5" y="3.500" width="11" height="7" fill="none" stroke="#fff" stroke-width="1.100"/><rect x="6.500" y="5" width="8" height="4" fill="#fff"/><rect x="16.400" y="5.500" width="1.300" height="3" fill="#fff"/><path d="M1.500 0.500 V3 M4 0.500 V3 M0.500 3 H5 V5 Q5 7 2.750 7 Q0.500 7 0.500 5Z M2.750 7 V10 H5" fill="none" stroke="#fff" stroke-width="1"/></svg>
  <svg style="left:1725px;top:13px" width="14" height="14" viewBox="0 0 14 14"><g fill="none" stroke="#fff" stroke-width="1.200"><path d="M1 13 A12 12 0 0 1 13 1"/><path d="M4.500 13 A8.500 8.500 0 0 1 13 4.500"/><path d="M8 13 A5 5 0 0 1 13 8"/></g><circle cx="12" cy="12" r="1.400" fill="#fff"/></svg>
  <svg style="left:1747px;top:13px" width="17" height="14" viewBox="0 0 17 14"><path d="M0.600 4.600 H3.500 L7 1.200 V12.800 L3.500 9.400 H0.600Z" fill="none" stroke="#fff" stroke-width="1.100"/><path d="M9 4.500 Q10.600 7 9 9.500 M11.300 2.800 Q14 7 11.300 11.200" fill="none" stroke="#fff" stroke-width="1.100"/><path d="M13.800 1.200 Q17 7 13.800 12.800" fill="none" stroke="#999" stroke-width="1.100"/></svg>
  <div class="t" style="left:1774px;top:11px;font-size:11.2px;line-height:18px;height:18px;color:#f4f4f4">CAT</div>
  <div class="t" style="left:1809px;top:2px;width:52px;text-align:center;font-size:11.2px;line-height:18px;height:18px;color:#f4f4f4">11:43</div>
  <div class="t" style="left:1805px;top:19px;width:60px;text-align:center;font-size:11.5px;line-height:18px;height:18px;color:#f4f4f4">20/2/2024</div>
  <svg style="left:1879px;top:12px" width="17" height="17" viewBox="0 0 17 17"><path d="M0.300 0.300 H16.700 V12.800 H11 L8.500 16.300 L6 12.800 H0.300Z" fill="#fff"/><path d="M3.500 3.800 H13.500 M3.500 6.300 H13.500 M3.500 8.800 H10" stroke="#1b1b1b" stroke-width="1"/></svg>
  <div class="a" style="left:1915px;top:0;width:1px;height:40px;background:#8a8a8a"></div>
</div>


<!-- ARROWS (annotations) -->
<svg style="left:0;top:0;pointer-events:none" width="1920" height="1080" viewBox="0 0 1920 1080">
  <path d="M1367.6 142.7 L1513.6 243.2 M1022.0 288.0 L1644.0 298.8 M1040.0 303.5 L1621.6 316.6 M1292.7 538.0 L1499.8 366.7 M1110.4 706.0 L955.1 276.0 M1523.6 505.0 L1558.5 381.5 M1643.0 431.4 L1621.8 389.5" stroke="#fff" stroke-width="2.300" fill="none" stroke-linecap="round"/>
  <path d="M1523.5 250.0 L1504.1 242.9 L1510.0 234.4Z M1656.0 299.0 L1635.9 303.9 L1636.1 293.5Z M1633.6 316.9 L1613.5 321.6 L1613.7 311.2Z M1509.0 359.0 L1496.9 375.8 L1490.3 367.7Z M951.0 264.7 L962.7 281.7 L952.9 285.3Z M1561.8 370.0 L1561.4 390.7 L1551.4 387.8Z M1616.4 378.8 L1630.1 394.3 L1620.8 399.0Z" fill="#fff"/>
</svg>

</body></html>
